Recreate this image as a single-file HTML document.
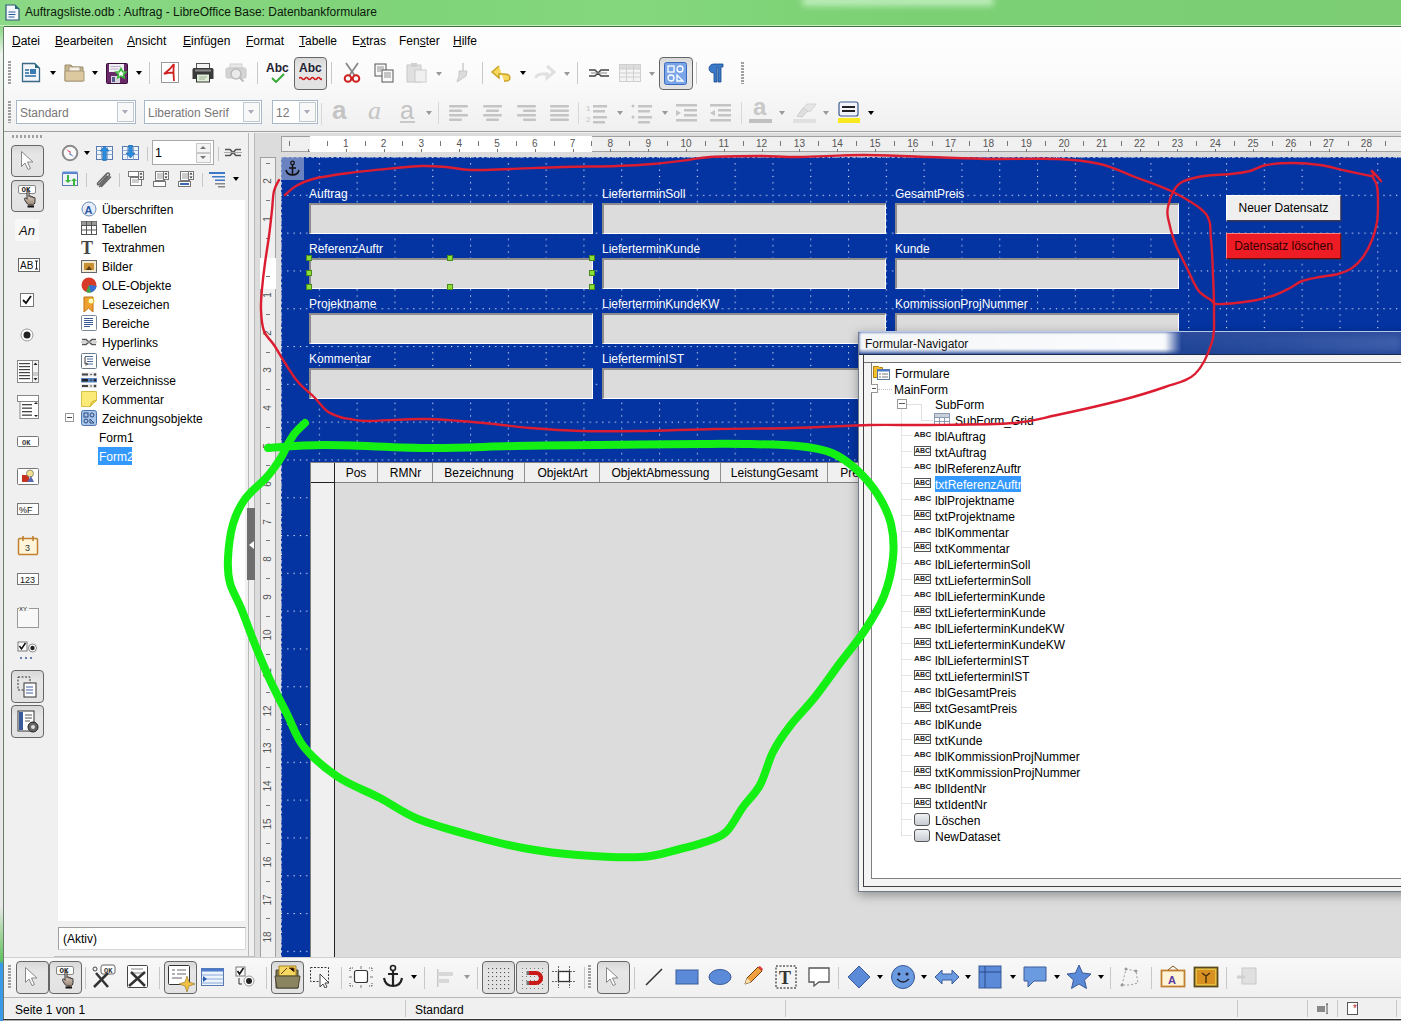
<!DOCTYPE html><html><head><meta charset="utf-8"><style>
*{margin:0;padding:0;box-sizing:border-box}
html,body{width:1401px;height:1021px;overflow:hidden;background:#f0f0f0;font-family:"Liberation Sans",sans-serif;font-size:12px;color:#000}
.a{position:absolute}
.t{position:absolute;white-space:nowrap;font-size:12px;line-height:14px}
.menu{top:34px}
.sep{position:absolute;width:1px;background:#c8c8c8}
.pbtn{position:absolute;border:1px solid #666;border-radius:4px;background:linear-gradient(180deg,#d8d8d8 0%,#e6e6e6 30%,#e2e2e2 100%)}
.dd{position:absolute;width:0;height:0;border-left:3.5px solid transparent;border-right:3.5px solid transparent;border-top:4px solid #000}
.ddg{position:absolute;width:0;height:0;border-left:3.5px solid transparent;border-right:3.5px solid transparent;border-top:4px solid #999}
.lbl{position:absolute;color:#fff;font-size:12px;line-height:14px;white-space:nowrap}
.fld{position:absolute;width:284px;height:31px;background:#dcdcdc;border-top:2px solid #8c8c8c;border-left:2px solid #8c8c8c;border-bottom:1px solid #fff;border-right:1px solid #fff}
.hd{position:absolute;width:6px;height:6px;background:#8be038;border:1px solid #4a8a1a}
.nv{position:absolute;font-size:12px;line-height:14px;white-space:nowrap}
</style></head><body>
<div class="a" style="left:0;top:0;width:1401px;height:27px;background:linear-gradient(90deg,#8bd886 0%,#7fd378 30%,#84d77c 45%,#7bd074 65%,#7ccd74 100%);border-bottom:1px solid #3f6f3a"></div>
<div class="a" style="left:0;top:25px;width:1401px;height:1px;background:#c8ecc4"></div>
<div class="a" style="left:0;top:26px;width:4px;height:995px;background:linear-gradient(180deg,#8ad684 0px,#b0e4ac 12px,#eef4ee 28px,#ececec 120px,#e8e8e8 880px,#90d08a 915px,#60c060 935px,#3a9ae8 938px,#3a9ae8 100%)"></div>
<svg class="a" style="left:5px;top:4px" width="15" height="17" viewBox="0 0 15 17"><path d="M1 1h9l4 4v11H1z" fill="#f4f8fc" stroke="#2a5a78" stroke-width="1.2"/><path d="M10 1l4 4h-4z" fill="#2a6a80"/><path d="M3.5 8h7M3.5 10.5h7M3.5 13h6" stroke="#2a5a9a" stroke-width="1"/></svg>
<div class="t" style="left:25px;top:5px;font-size:12px;color:#0a1a0a">Auftragsliste.odb : Auftrag - LibreOffice Base: Datenbankformulare</div>
<div class="a" style="left:802px;top:-4px;width:192px;height:10px;background:rgba(230,255,230,0.6);filter:blur(3px);border-radius:4px"></div>
<div class="a" style="left:3px;top:27px;width:1398px;height:994px;background:#f0f0f0;border-left:1px solid #6c7c6c"></div>
<div class="a" style="left:4px;top:27px;width:1397px;height:105px;background:linear-gradient(180deg,#fefefe 0%,#fbfbfb 45%,#f0f0f0 100%);border-bottom:1px solid #a0a0a0"></div>
<div class="t menu" style="left:12px"><u>D</u>atei</div>
<div class="t menu" style="left:55px"><u>B</u>earbeiten</div>
<div class="t menu" style="left:127px"><u>A</u>nsicht</div>
<div class="t menu" style="left:183px"><u>E</u>infügen</div>
<div class="t menu" style="left:246px"><u>F</u>ormat</div>
<div class="t menu" style="left:299px"><u>T</u>abelle</div>
<div class="t menu" style="left:352px">E<u>x</u>tras</div>
<div class="t menu" style="left:399px">Fen<u>s</u>ter</div>
<div class="t menu" style="left:453px"><u>H</u>ilfe</div>
<div class="a" style="left:8px;top:61px;width:3px;height:23px;background:repeating-linear-gradient(180deg,#a0a0a0 0 2px,transparent 2px 3px)"></div>
<svg class="a" style="left:21px;top:62px" width="20" height="21" viewBox="0 0 20 21"><path d="M1.5 1.5h12l5 5v13h-17z" fill="#f2f6fa" stroke="#3a6a88" stroke-width="1.3"/><path d="M14 1l5 5h-5z" fill="#2a6a80"/><path d="M4 8h4M4 11h4M4 14h11" stroke="#2a6aa0" stroke-width="1.3"/><rect x="9" y="7" width="6" height="5" fill="#3a7ab0"/></svg>
<div class="dd" style="left:50px;top:71px"></div>
<svg class="a" style="left:64px;top:63px" width="21" height="19" viewBox="0 0 21 19"><path d="M1 2h6l2 2h10v14H1z" fill="#c8b890" stroke="#9a8a6a"/><rect x="5" y="4" width="11" height="6" fill="#f4f0e4" stroke="#a09070" stroke-width="0.8"/><path d="M1 8h19v10H1z" fill="#dcc9a0" stroke="#a89878"/></svg>
<div class="dd" style="left:92px;top:71px"></div>
<svg class="a" style="left:106px;top:63px" width="22" height="21" viewBox="0 0 22 21"><rect x="0.5" y="0.5" width="21" height="20" rx="1" fill="#6a2a6a" stroke="#3a103a"/><rect x="3" y="1" width="15" height="8" fill="#f0eef4"/><path d="M4.5 3.5h10M4.5 6h8" stroke="#b0a8c0" stroke-width="0.8"/><rect x="5" y="13" width="9" height="7" fill="#d8d4e0"/><rect x="6" y="14" width="3" height="5" fill="#5a5a8a"/><path d="M15 5.5l1.6 3.2 3.4.4-2.5 2.3.7 3.4-3.2-1.7-3.2 1.7.7-3.4-2.5-2.3 3.4-.4z" fill="#fff" stroke="#3ab83a" stroke-width="1.6"/></svg>
<div class="dd" style="left:136px;top:71px"></div>
<div class="sep" style="left:149px;top:62px;height:22px"></div>
<svg class="a" style="left:161px;top:62px" width="18" height="21" viewBox="0 0 18 21"><rect x="0.5" y="0.5" width="17" height="20" fill="#fff" stroke="#999"/><path d="M13 2c-2 3-6 7-10 10 3-1 6-1.5 9-1.5M13 2c-1 5-0.5 11 0 17" stroke="#d02020" stroke-width="1.8" fill="none"/></svg>
<svg class="a" style="left:192px;top:63px" width="22" height="20" viewBox="0 0 22 20"><rect x="4.5" y="0.5" width="13" height="5" fill="#f4f4f4" stroke="#555"/><path d="M2 5h18a1.5 1.5 0 0 1 1.5 1.5V16h-21V6.5A1.5 1.5 0 0 1 2 5z" fill="#3a3a3a"/><rect x="3" y="6.5" width="16" height="2" fill="#8a8a8a"/><rect x="4.5" y="11" width="13" height="8" fill="#dfeed8" stroke="#333"/><path d="M7 14h8M7 16h6" stroke="#8aa080" stroke-width="0.8"/></svg>
<svg class="a" style="left:225px;top:63px" width="22" height="20" viewBox="0 0 22 20"><rect x="5" y="1" width="12" height="4" fill="#e8e8e8" stroke="#d0d0d0"/><rect x="1" y="5" width="20" height="10" rx="1.5" fill="#d4d4d4" stroke="#c8c8c8"/><circle cx="11" cy="11" r="5" fill="#eaeaea" stroke="#bcbcbc" stroke-width="1.6"/><path d="M14.5 14.5l4 4" stroke="#bcbcbc" stroke-width="2"/></svg>
<div class="sep" style="left:257px;top:62px;height:22px"></div>
<div class="t" style="left:266px;top:61px;font-weight:bold;font-size:12px;color:#223">Abc</div>
<svg class="a" style="left:271px;top:73px" width="14" height="10" viewBox="0 0 14 10"><path d="M1 5l4 4 8-8" stroke="#3aaa3a" stroke-width="2" fill="none"/></svg>
<div class="pbtn" style="left:294px;top:57px;width:33px;height:33px"></div>
<div class="t" style="left:299px;top:61px;font-weight:bold;font-size:12px;color:#223">Abc</div>
<svg class="a" style="left:299px;top:76px" width="23" height="5" viewBox="0 0 23 5"><path d="M0 2.5q1.5-2 3 0t3 0 3 0 3 0 3 0 3 0 3 0 2 0" stroke="#d02020" stroke-width="1.6" fill="none"/></svg>
<div class="sep" style="left:331px;top:62px;height:22px"></div>
<svg class="a" style="left:343px;top:62px" width="18" height="21" viewBox="0 0 18 21"><path d="M3 1l9 13M15 1L6 14" stroke="#888" stroke-width="1.8"/><circle cx="5" cy="16.5" r="3.3" fill="none" stroke="#d02020" stroke-width="2"/><circle cx="13" cy="16.5" r="3.3" fill="none" stroke="#d02020" stroke-width="2"/></svg>
<svg class="a" style="left:374px;top:63px" width="20" height="20" viewBox="0 0 20 20"><rect x="1" y="1" width="11" height="12" fill="#fafafa" stroke="#555"/><rect x="8" y="7" width="11" height="12" fill="#fafafa" stroke="#555"/><path d="M3 4h7M3 6h7M3 8h4M10 10h7M10 12h7M10 14h7" stroke="#777" stroke-width="0.8"/></svg>
<svg class="a" style="left:406px;top:62px" width="22" height="21" viewBox="0 0 22 21"><rect x="1" y="3" width="14" height="17" fill="#e0e0e0" stroke="#c8c8c8"/><rect x="5" y="1" width="6" height="4" fill="#d0d0d0"/><rect x="9" y="8" width="11" height="12" fill="#f0f0f0" stroke="#ccc"/></svg>
<div class="ddg" style="left:436px;top:72px"></div>
<svg class="a" style="left:452px;top:62px" width="18" height="21" viewBox="0 0 18 21"><path d="M10 1l2 0 0 8-2 0z" fill="#d8d8d8"/><path d="M7 9h8l-1 5-9 6 2-6z" fill="#dcdcdc" stroke="#c8c8c8"/></svg>
<div class="sep" style="left:482px;top:62px;height:22px"></div>
<svg class="a" style="left:490px;top:64px" width="23" height="18" viewBox="0 0 23 18"><path d="M9 2L2 8l7 6V10h5c4 0 6 2 6 4s-2 3-4 3h-2" stroke="#c8a020" stroke-width="1.4" fill="#f4d860"/></svg>
<div class="dd" style="left:520px;top:71px"></div>
<svg class="a" style="left:534px;top:64px" width="22" height="18" viewBox="0 0 22 18"><path d="M13 2l7 6-7 6V10H8c-4 0-6 2-6 4" stroke="#e0e0e0" stroke-width="3" fill="none"/></svg>
<div class="ddg" style="left:564px;top:72px"></div>
<div class="sep" style="left:577px;top:62px;height:22px"></div>
<svg class="a" style="left:588px;top:66px" width="22" height="14" viewBox="0 0 22 14"><path d="M1 4h6l3 3 3-3h8M1 10h6l3-3 3 3h8" stroke="#444" stroke-width="1.5" fill="none"/><path d="M3 7h16" stroke="#888" stroke-width="1"/></svg>
<svg class="a" style="left:619px;top:64px" width="22" height="18" viewBox="0 0 22 18"><rect x="0.5" y="0.5" width="21" height="17" fill="#f4f4f4" stroke="#d0d0d0"/><rect x="1" y="1" width="20" height="4" fill="#dcdcdc"/><path d="M1 5h20M1 9h20M1 13h20M7.5 1v16M14.5 1v16" stroke="#d0d0d0"/></svg>
<div class="ddg" style="left:649px;top:72px"></div>
<div class="pbtn" style="left:659px;top:57px;width:34px;height:33px"></div>
<svg class="a" style="left:664px;top:62px" width="23" height="23" viewBox="0 0 23 23"><rect x="0.5" y="0.5" width="22" height="22" rx="2" fill="#7aa6e8" stroke="#3a6ac0"/><rect x="4" y="4" width="6" height="6" fill="none" stroke="#fff" stroke-width="1.3"/><circle cx="16" cy="7" r="3" fill="none" stroke="#fff" stroke-width="1.3"/><circle cx="7" cy="16" r="3" fill="none" stroke="#fff" stroke-width="1.3"/><path d="M13 19h6l-6-6z" fill="none" stroke="#fff" stroke-width="1.3"/></svg>
<div class="sep" style="left:696px;top:62px;height:22px"></div>
<svg class="a" style="left:708px;top:63px" width="16" height="20" viewBox="0 0 16 20"><path d="M6 1h9v3h-2v15h-3V4H9v15H6V10c-3 0-5-2-5-4.5S3 1 6 1z" fill="#3a7ac8" stroke="#1a4a88" stroke-width="0.8"/></svg>
<div class="a" style="left:741px;top:62px;width:3px;height:22px;background:repeating-linear-gradient(180deg,#a0a0a0 0 2px,transparent 2px 3px)"></div>
<div class="a" style="left:8px;top:101px;width:3px;height:22px;background:repeating-linear-gradient(180deg,#a0a0a0 0 2px,transparent 2px 3px)"></div>
<div class="a" style="left:16px;top:100px;width:120px;height:24px;background:#fff;border:1px solid #a8b8c8"></div>
<div class="a" style="left:117px;top:102px;width:17px;height:20px;border:1px solid #c0c8d0;background:#f8f8f8"></div>
<div class="ddg" style="left:122px;top:110px;border-top-color:#aab"></div>
<div class="t" style="left:20px;top:106px;color:#777">Standard</div>
<div class="a" style="left:144px;top:100px;width:118px;height:24px;background:#fff;border:1px solid #a8b8c8"></div>
<div class="a" style="left:243px;top:102px;width:17px;height:20px;border:1px solid #c0c8d0;background:#f8f8f8"></div>
<div class="ddg" style="left:248px;top:110px;border-top-color:#aab"></div>
<div class="t" style="left:148px;top:106px;color:#777">Liberation Serif</div>
<div class="a" style="left:272px;top:100px;width:46px;height:24px;background:#fff;border:1px solid #a8b8c8"></div>
<div class="a" style="left:299px;top:102px;width:17px;height:20px;border:1px solid #c0c8d0;background:#f8f8f8"></div>
<div class="ddg" style="left:304px;top:110px;border-top-color:#aab"></div>
<div class="t" style="left:276px;top:106px;color:#777">12</div>
<div class="sep" style="left:321px;top:103px;height:22px;background:#d8d8d8"></div>
<svg class="a" style="left:328px;top:98px" width="95" height="28"><text x="4" y="21" font-size="26" font-weight="bold" fill="#c4c4c4" font-family="Liberation Sans">a</text><text x="40" y="21" font-size="26" font-style="italic" fill="#c4c4c4" font-family="Liberation Serif">a</text><text x="72" y="21" font-size="25" fill="#c4c4c4" font-family="Liberation Sans">a</text><rect x="72" y="23" width="15" height="2" fill="#c8c8c8"/></svg>
<div class="ddg" style="left:426px;top:111px"></div>
<div class="sep" style="left:438px;top:102px;height:22px;background:#d8d8d8"></div>
<svg class="a" style="left:449px;top:103px" width="20" height="20"><rect x="0" y="2.0" width="19" height="2.5" rx="1" fill="#c4c4c4"/><rect x="0" y="6.5" width="13" height="2.5" rx="1" fill="#c4c4c4"/><rect x="0" y="11.0" width="19" height="2.5" rx="1" fill="#c4c4c4"/><rect x="0" y="15.5" width="13" height="2.5" rx="1" fill="#c4c4c4"/></svg>
<svg class="a" style="left:483px;top:103px" width="20" height="20"><rect x="0" y="2.0" width="19" height="2.5" rx="1" fill="#c4c4c4"/><rect x="3" y="6.5" width="13" height="2.5" rx="1" fill="#c4c4c4"/><rect x="0" y="11.0" width="19" height="2.5" rx="1" fill="#c4c4c4"/><rect x="3" y="15.5" width="13" height="2.5" rx="1" fill="#c4c4c4"/></svg>
<svg class="a" style="left:517px;top:103px" width="20" height="20"><rect x="0" y="2.0" width="19" height="2.5" rx="1" fill="#c4c4c4"/><rect x="6" y="6.5" width="13" height="2.5" rx="1" fill="#c4c4c4"/><rect x="0" y="11.0" width="19" height="2.5" rx="1" fill="#c4c4c4"/><rect x="6" y="15.5" width="13" height="2.5" rx="1" fill="#c4c4c4"/></svg>
<svg class="a" style="left:550px;top:103px" width="20" height="20"><rect x="0" y="2.0" width="19" height="2.5" rx="1" fill="#c4c4c4"/><rect x="0" y="6.5" width="19" height="2.5" rx="1" fill="#c4c4c4"/><rect x="0" y="11.0" width="19" height="2.5" rx="1" fill="#c4c4c4"/><rect x="0" y="15.5" width="19" height="2.5" rx="1" fill="#c4c4c4"/></svg>
<div class="sep" style="left:578px;top:102px;height:22px;background:#d8d8d8"></div>
<svg class="a" style="left:586px;top:102px" width="22" height="22"><text x="0" y="9" font-size="8" fill="#c4c4c4" font-family="Liberation Sans">1</text><text x="0" y="20" font-size="8" fill="#c4c4c4" font-family="Liberation Sans">2</text><rect x="7" y="3" width="14" height="2.5" fill="#c4c4c4"/><rect x="7" y="8" width="12" height="2.5" fill="#c4c4c4"/><rect x="7" y="14" width="14" height="2.5" fill="#c4c4c4"/><rect x="7" y="19" width="12" height="2.5" fill="#c4c4c4"/></svg>
<div class="ddg" style="left:617px;top:111px"></div>
<svg class="a" style="left:631px;top:102px" width="22" height="22"><circle cx="2" cy="4" r="1.5" fill="#c4c4c4"/><circle cx="2" cy="15" r="1.5" fill="#c4c4c4"/><rect x="7" y="3" width="14" height="2.5" fill="#c4c4c4"/><rect x="7" y="8" width="12" height="2.5" fill="#c4c4c4"/><rect x="7" y="14" width="14" height="2.5" fill="#c4c4c4"/><rect x="7" y="19" width="12" height="2.5" fill="#c4c4c4"/></svg>
<div class="ddg" style="left:662px;top:111px"></div>
<svg class="a" style="left:676px;top:102px" width="22" height="22"><rect x="0" y="2" width="21" height="2.5" fill="#c4c4c4"/><rect x="8" y="7" width="13" height="2.5" fill="#c4c4c4"/><rect x="8" y="12" width="13" height="2.5" fill="#c4c4c4"/><rect x="0" y="17" width="21" height="2.5" fill="#c4c4c4"/><path d="M0 8l5 3-5 3z" fill="#c4c4c4"/></svg>
<svg class="a" style="left:710px;top:102px" width="22" height="22"><rect x="0" y="2" width="21" height="2.5" fill="#c4c4c4"/><rect x="8" y="7" width="13" height="2.5" fill="#c4c4c4"/><rect x="8" y="12" width="13" height="2.5" fill="#c4c4c4"/><rect x="0" y="17" width="21" height="2.5" fill="#c4c4c4"/><path d="M5 8l-5 3 5 3z" fill="#c4c4c4"/></svg>
<div class="sep" style="left:741px;top:102px;height:22px;background:#d8d8d8"></div>
<svg class="a" style="left:752px;top:98px" width="20" height="22"><text x="1" y="17" font-size="24" font-weight="bold" fill="#c8c8c8" font-family="Liberation Sans">a</text></svg>
<div class="a" style="left:749px;top:119px;width:23px;height:4px;background:#c0c0c0"></div>
<div class="ddg" style="left:779px;top:111px"></div>
<svg class="a" style="left:795px;top:103px" width="22" height="16"><path d="M2 13l6-8c1-1.5 3-1.5 4 0l2 2-7 7z" fill="#dedede" stroke="#cfcfcf"/><path d="M8 5l4-4h9l-6 8z" fill="#e6e6e6" stroke="#d4d4d4"/></svg>
<div class="a" style="left:793px;top:119px;width:23px;height:4px;background:#e0e0e0"></div>
<div class="ddg" style="left:823px;top:111px"></div>
<svg class="a" style="left:837px;top:100px" width="24" height="24"><rect x="2" y="2" width="19" height="14" rx="2" fill="#f0f4fa" stroke="#3a5a8a" stroke-width="1.2"/><rect x="5" y="6" width="13" height="2" fill="#222"/><rect x="5" y="10" width="13" height="2" fill="#222"/><rect x="1" y="18" width="22" height="5" fill="#f8e820"/></svg>
<div class="dd" style="left:868px;top:111px"></div>
<div class="a" style="left:12px;top:135px;width:32px;height:3px;background:repeating-linear-gradient(90deg,#a0a0a0 0 2px,transparent 2px 4px)"></div>
<div class="pbtn" style="left:11px;top:145px;width:33px;height:32px"></div>
<svg class="a" style="left:19px;top:150px" width="18" height="22"><path d="M2.5 1.5v15l3.5-3.5 3 6.5 2.5-1-3-6.5h5.5z" fill="#fff" stroke="#888" stroke-width="1"/></svg>
<div class="pbtn" style="left:11px;top:180px;width:33px;height:32px"></div>
<svg class="a" style="left:15px;top:183px" width="26" height="26"><defs><linearGradient id="skinG" x1="0" y1="0" x2="0" y2="1"><stop offset="0" stop-color="#f4eee8"/><stop offset="1" stop-color="#9a8470"/></linearGradient></defs><rect x="3.5" y="2.5" width="17" height="8" rx="1.5" fill="#fff" stroke="#888"/><text x="6.5" y="9.3" font-size="7.5" font-weight="bold" fill="#222" font-family="Liberation Mono">OK</text><path d="M12 9c0-1.2 2-1.2 2 0v4.5c0-1 2-1 2 0v0.8c0-1 2-1 2 0v0.8c0-1 2-1 2 0v3.4c0 2-1 3.5-2.5 3.5h-3c-1.5 0-2.5-1.5-3.5-3l-1.5-2.5c-0.6-1 0.8-2 1.6-1.2l0.9 1z" fill="url(#skinG)" stroke="#222" stroke-width="0.9"/><rect x="12.5" y="22.5" width="6.5" height="2" fill="#111"/></svg>
<div class="a" style="left:15px;top:219px;width:24px;height:22px;background:#f8f8f8"></div>
<div class="t" style="left:19px;top:224px;font-style:italic;font-size:13px;color:#111">An</div>
<svg class="a" style="left:18px;top:258px" width="22" height="14"><rect x="0.5" y="0.5" width="21" height="13" fill="#fff" stroke="#666"/><text x="2" y="11" font-size="10" fill="#111" font-family="Liberation Sans">AB</text><path d="M17 3h3M18.5 3v8M17 11h3" stroke="#111" stroke-width="0.9"/></svg>
<svg class="a" style="left:20px;top:293px" width="14" height="14"><rect x="0.5" y="0.5" width="13" height="13" fill="#fff" stroke="#777"/><path d="M3 7l3 3 5-7" stroke="#111" stroke-width="1.8" fill="none"/></svg>
<svg class="a" style="left:20px;top:328px" width="14" height="14"><circle cx="7" cy="7" r="6" fill="#fff" stroke="#999"/><circle cx="7" cy="7" r="3.5" fill="#222"/></svg>
<svg class="a" style="left:17px;top:360px" width="22" height="24"><rect x="0.5" y="0.5" width="21" height="22" fill="#fff" stroke="#888"/><rect x="15.5" y="0.5" width="6" height="22" fill="#f4f4f4" stroke="#888"/><rect x="2" y="3" width="11" height="1.2" fill="#444"/><rect x="2" y="6" width="11" height="1.2" fill="#444"/><rect x="2" y="9" width="11" height="1.2" fill="#444"/><rect x="2" y="12" width="11" height="1.2" fill="#444"/><rect x="2" y="15" width="11" height="1.2" fill="#444"/><rect x="2" y="18" width="11" height="1.2" fill="#444"/><path d="M16.5 5l2-2.5 2 2.5zM16.5 18l2 2.5 2-2.5z" fill="#222"/><rect x="16" y="12" width="5" height="4" fill="#ccc"/></svg>
<svg class="a" style="left:17px;top:395px" width="22" height="24"><rect x="0.5" y="0.5" width="21" height="6" fill="#fff" stroke="#888"/><rect x="3" y="6.5" width="18.5" height="17" fill="#fff" stroke="#888"/><rect x="5" y="9.0" width="10" height="1.3" fill="#444"/><rect x="5" y="12.5" width="10" height="1.3" fill="#444"/><rect x="5" y="16.0" width="10" height="1.3" fill="#444"/><rect x="5" y="19.5" width="10" height="1.3" fill="#444"/><path d="M17 9l2-2 2 2zM17 20l2 2 2-2z" fill="#222"/></svg>
<svg class="a" style="left:17px;top:436px" width="22" height="11"><rect x="0.5" y="0.5" width="21" height="10" rx="1" fill="#fff" stroke="#777"/><text x="5" y="8.5" font-size="7" font-weight="bold" fill="#333" font-family="Liberation Mono">OK</text></svg>
<svg class="a" style="left:17px;top:468px" width="22" height="17"><rect x="0.5" y="0.5" width="21" height="16" rx="1" fill="#fff" stroke="#777"/><rect x="5" y="7" width="7" height="7" fill="#c83020"/><circle cx="13" cy="5.5" r="3.5" fill="#f4e090" stroke="#555" stroke-width="0.6"/><path d="M10 14l4-6 3 6z" fill="#5a6ab0"/></svg>
<svg class="a" style="left:17px;top:503px" width="22" height="12"><rect x="0.5" y="0.5" width="21" height="11" fill="#fff" stroke="#777"/><text x="2" y="9.5" font-size="9" fill="#111" font-family="Liberation Sans">%F</text></svg>
<svg class="a" style="left:17px;top:535px" width="22" height="21"><rect x="1.5" y="3.5" width="19" height="16" rx="1" fill="#fff4d8" stroke="#c08030" stroke-width="1.5"/><path d="M6 1v5M16 1v5" stroke="#c08030" stroke-width="1.6"/><text x="8" y="16" font-size="9" fill="#333" font-family="Liberation Sans">3</text></svg>
<svg class="a" style="left:17px;top:573px" width="22" height="12"><rect x="0.5" y="0.5" width="21" height="11" fill="#fff" stroke="#777"/><text x="3" y="9.5" font-size="9" fill="#111" font-family="Liberation Sans">123</text></svg>
<svg class="a" style="left:17px;top:604px" width="22" height="24"><rect x="0.5" y="4.5" width="21" height="19" fill="#f8f8f8" stroke="#999"/><rect x="2" y="0" width="10" height="7" fill="#f0f0f0"/><text x="2" y="7" font-size="6" fill="#111" font-family="Liberation Sans">XY</text></svg>
<svg class="a" style="left:17px;top:640px" width="22" height="22"><rect x="1" y="2" width="9" height="9" fill="#fff" stroke="#777"/><path d="M2.5 6l2 3 4-6" stroke="#111" stroke-width="1.5" fill="none"/><circle cx="15.5" cy="8" r="4" fill="#fff" stroke="#888"/><circle cx="15.5" cy="8" r="2.2" fill="#222"/><circle cx="4" cy="18" r="1" fill="#3a5a9a"/><circle cx="9" cy="18" r="1" fill="#3a5a9a"/><circle cx="14" cy="18" r="1" fill="#3a5a9a"/></svg>
<div class="pbtn" style="left:11px;top:670px;width:33px;height:33px"></div>
<svg class="a" style="left:16px;top:675px" width="24" height="24"><rect x="2" y="2" width="12" height="13" fill="none" stroke="#333" stroke-dasharray="2 1.5"/><rect x="8" y="8" width="12" height="14" fill="#fff" stroke="#333"/><path d="M10 12h7M10 15h7M10 18h7" stroke="#3a5a9a"/></svg>
<div class="pbtn" style="left:11px;top:705px;width:33px;height:33px"></div>
<svg class="a" style="left:16px;top:710px" width="24" height="24"><rect x="2" y="1" width="16" height="20" fill="#fff" stroke="#333"/><rect x="3" y="2" width="4" height="18" fill="#3a5a9a"/><path d="M9 5h7M9 8h7M9 11h5" stroke="#555"/><circle cx="17" cy="17" r="5" fill="#666" stroke="#222"/><circle cx="17" cy="17" r="2" fill="#ddd"/></svg>
<div class="a" style="left:248px;top:133px;width:1px;height:825px;background:#b8b8b8"></div>
<div class="a" style="left:254px;top:133px;width:1px;height:825px;background:#b8b8b8"></div>
<div class="a" style="left:247px;top:508px;width:8px;height:72px;background:#6e6e6e"></div>
<div class="a" style="left:249px;top:541px;width:0;height:0;border-top:4px solid transparent;border-bottom:4px solid transparent;border-right:5px solid #fff"></div>
<svg class="a" style="left:61px;top:144px" width="18" height="18"><circle cx="9" cy="9" r="7.3" fill="#fafafa" stroke="#8a8a8a" stroke-width="2"/><path d="M5 5l5 3 -1 1z" fill="#e02a4a"/><path d="M13 13l-5-3 1-1z" fill="#3a6ab0"/></svg>
<div class="dd" style="left:84px;top:151px"></div>
<svg class="a" style="left:96px;top:145px" width="17" height="16"><rect x="0.5" y="1.5" width="16" height="13" fill="#eef4fb" stroke="#5a7ab0"/><path d="M0 5.5h17M0 9.5h17M5.5 1v14M11.5 1v14" stroke="#7a9ac8" stroke-width="0.8"/><path d="M8.5 1l4.5 5h-2.7v9.5h-3.6V6H4z" fill="#2a8ee0" stroke="#1a5aa0" stroke-width="0.6"/></svg>
<svg class="a" style="left:122px;top:145px" width="17" height="16"><rect x="0.5" y="1.5" width="16" height="13" fill="#eef4fb" stroke="#5a7ab0"/><path d="M0 5.5h17M0 9.5h17M5.5 1v14M11.5 1v14" stroke="#7a9ac8" stroke-width="0.8"/><path d="M8.5 13l4.5-5h-2.7V0h-3.6v8H4z" fill="#2a8ee0" stroke="#1a5aa0" stroke-width="0.6"/></svg>
<div class="sep" style="left:147px;top:147px;height:14px"></div>
<div class="a" style="left:152px;top:140px;width:62px;height:25px;background:#fff;border:1px solid #a8a8a8"></div>
<div class="t" style="left:155px;top:146px;font-size:12.5px">1</div>
<div class="a" style="left:196px;top:143px;width:15px;height:10px;border:1px solid #c8c8c8;background:#f4f4f4"></div>
<div class="a" style="left:196px;top:153px;width:15px;height:10px;border:1px solid #c8c8c8;background:#f4f4f4"></div>
<div class="a" style="left:200px;top:146px;width:0;height:0;border-left:3.5px solid transparent;border-right:3.5px solid transparent;border-bottom:3px solid #777"></div>
<div class="a" style="left:200px;top:156px;width:0;height:0;border-left:3.5px solid transparent;border-right:3.5px solid transparent;border-top:3px solid #777"></div>
<div class="sep" style="left:218px;top:147px;height:14px"></div>
<svg class="a" style="left:224px;top:146px" width="18" height="13"><path d="M1 3.5h5l3 3 3-3h5M1 9.5h5l3-3 3 3h5" stroke="#555" stroke-width="1.7" fill="none"/><path d="M0 6.5h18" stroke="#aaa" stroke-width="1"/></svg>
<svg class="a" style="left:62px;top:171px" width="16" height="16"><rect x="0.5" y="2.5" width="15" height="12" fill="#f0f4fa" stroke="#5a7ab0"/><rect x="0.5" y="0.5" width="15" height="2" fill="#5a8ad8"/><path d="M5 4v5h-2l3 3 3-3H7V4z" fill="#3ab83a"/><path d="M11 15v-5h-2l3-3 3 3h-2v5z" fill="#3ab83a"/></svg>
<div class="sep" style="left:86px;top:173px;height:14px"></div>
<svg class="a" style="left:95px;top:171px" width="17" height="17"><path d="M4.5 15.5L14 5c1.5-1.7-0.5-4-2.2-2.4L2.8 12c-1 1 0.2 2.4 1.2 1.5l8-8.5M6.5 15.5L15.5 6" stroke="#666" stroke-width="1.6" fill="none" stroke-linecap="round"/></svg>
<div class="sep" style="left:119px;top:173px;height:14px"></div>
<svg class="a" style="left:128px;top:171px" width="16" height="17"><rect x="0.5" y="0.5" width="11" height="5" fill="#fff" stroke="#777"/><rect x="2.5" y="6.5" width="11" height="8" fill="#fff" stroke="#777"/><path d="M4 9h7M4 11h7" stroke="#999"/><rect x="10.5" y="0.5" width="5" height="8" fill="#fff" stroke="#777"/><path d="M11.5 3.5l1.5-2 1.5 2zM11.5 5.5l1.5 2 1.5-2z" fill="#222"/></svg>
<svg class="a" style="left:153px;top:171px" width="16" height="17"><rect x="2.5" y="0.5" width="9" height="9" fill="#fff" stroke="#777"/><path d="M4 3h6M4 5h6M4 7h6" stroke="#999"/><rect x="0.5" y="10.5" width="12" height="5" fill="#fff" stroke="#777"/><rect x="10.5" y="0.5" width="5" height="8" fill="#fff" stroke="#777"/><path d="M11.5 3.5l1.5-2 1.5 2zM11.5 5.5l1.5 2 1.5-2z" fill="#222"/></svg>
<svg class="a" style="left:178px;top:171px" width="16" height="17"><rect x="2.5" y="0.5" width="9" height="9" fill="#fff" stroke="#777"/><path d="M4 3h6M4 5h6M4 7h6" stroke="#999"/><rect x="0.5" y="10.5" width="12" height="5" fill="#fff" stroke="#777"/><rect x="2" y="12" width="9" height="2" fill="#3a6ab8"/><rect x="10.5" y="0.5" width="5" height="8" fill="#fff" stroke="#777"/><path d="M11.5 3.5l1.5-2 1.5 2zM11.5 5.5l1.5 2 1.5-2z" fill="#222"/></svg>
<div class="sep" style="left:202px;top:173px;height:14px"></div>
<svg class="a" style="left:209px;top:172px" width="18" height="16"><rect x="0" y="0" width="16" height="2" fill="#3a7ac8"/><rect x="3" y="4" width="13" height="1.5" fill="#3a7ac8"/><rect x="6" y="7.5" width="10" height="1.5" fill="#3a7ac8"/><rect x="6" y="11" width="10" height="1.5" fill="#888"/><rect x="9" y="14" width="7" height="1.5" fill="#888"/></svg>
<div class="dd" style="left:233px;top:177px"></div>
<div class="a" style="left:58px;top:200px;width:187px;height:721px;background:#fff"></div>
<div class="nv" style="left:102px;top:203px">Überschriften</div>
<div class="nv" style="left:102px;top:222px">Tabellen</div>
<div class="nv" style="left:102px;top:241px">Textrahmen</div>
<div class="nv" style="left:102px;top:260px">Bilder</div>
<div class="nv" style="left:102px;top:279px">OLE-Objekte</div>
<div class="nv" style="left:102px;top:298px">Lesezeichen</div>
<div class="nv" style="left:102px;top:317px">Bereiche</div>
<div class="nv" style="left:102px;top:336px">Hyperlinks</div>
<div class="nv" style="left:102px;top:355px">Verweise</div>
<div class="nv" style="left:102px;top:374px">Verzeichnisse</div>
<div class="nv" style="left:102px;top:393px">Kommentar</div>
<div class="nv" style="left:102px;top:412px">Zeichnungsobjekte</div>
<svg class="a" style="left:81px;top:201px" width="16" height="16"><circle cx="8" cy="8" r="7" fill="#e8eef8" stroke="#6a8ab8"/><text x="3.5" y="12.5" font-size="11" font-weight="bold" fill="#2a5aa8" font-family="Liberation Sans">A</text></svg>
<svg class="a" style="left:81px;top:220px" width="16" height="16"><rect x="0.5" y="1.5" width="15" height="13" fill="#fff" stroke="#555"/><rect x="0.5" y="1.5" width="15" height="4" fill="#999"/><path d="M0 5.5h16M0 10h16M5.5 1v14M10.5 1v14" stroke="#555"/></svg>
<svg class="a" style="left:81px;top:239px" width="16" height="16"><text x="0" y="15" font-size="18" font-weight="bold" fill="#444" font-family="Liberation Serif">T</text></svg>
<svg class="a" style="left:81px;top:258px" width="16" height="16"><rect x="0.5" y="2.5" width="15" height="12" fill="#f0e8d0" stroke="#666"/><rect x="3" y="5" width="10" height="7" fill="#c89030"/><path d="M5 12l3-4 3 4" fill="#5a3a10"/></svg>
<svg class="a" style="left:81px;top:277px" width="16" height="16"><circle cx="8" cy="8" r="7.5" fill="#d83a2a"/><path d="M8 8l7.5 1A7.5 7.5 0 0 1 5 15z" fill="#3aa84a"/><path d="M8 8l2 7.2A7.5 7.5 0 0 0 15.5 9z" fill="#3a6ad8"/></svg>
<svg class="a" style="left:81px;top:296px" width="16" height="16"><path d="M3 1h9v15l-4.5-4L3 16z" fill="#f0a030" stroke="#c07010"/><circle cx="10" cy="5" r="3" fill="#fff8c0" stroke="#e0b020"/></svg>
<svg class="a" style="left:81px;top:315px" width="16" height="16"><rect x="0.5" y="0.5" width="15" height="15" rx="1" fill="#fff" stroke="#7a8a9a"/><path d="M3 3.5h9M3 5.5h9M3 7.5h9M3 9.5h9M3 11.5h6" stroke="#3a5a9a"/></svg>
<svg class="a" style="left:81px;top:334px" width="16" height="16"><path d="M1 5.5h4l3 2.5 3-2.5h4M1 10.5h4l3-2.5 3 2.5h4" stroke="#555" stroke-width="1.6" fill="none"/><path d="M0 8h16" stroke="#aaa" stroke-width="1"/></svg>
<svg class="a" style="left:81px;top:353px" width="16" height="16"><rect x="0.5" y="0.5" width="15" height="15" rx="1" fill="#fff" stroke="#6a7a8a"/><path d="M4 3.5h8M6 6h6M6 8.5h6M6 11h6" stroke="#4a6a9a"/><path d="M4 4v7h2" stroke="#333" fill="none"/><path d="M5 9.5l1.5 1.5L5 12.5" stroke="#333" fill="none"/></svg>
<svg class="a" style="left:81px;top:372px" width="16" height="16"><rect x="0" y="0.5" width="16" height="4" fill="#e8e8e8"/><rect x="1" y="1.5" width="6" height="2" fill="#444"/><circle cx="10" cy="2.5" r="0.8" fill="#444"/><circle cx="14" cy="2.5" r="1.3" fill="#444"/><rect x="0" y="6" width="16" height="4.5" fill="#5a84c0"/><rect x="1" y="7" width="6" height="2.5" fill="#222"/><circle cx="10" cy="8.2" r="0.8" fill="#222"/><circle cx="14" cy="8.2" r="1.3" fill="#222"/><rect x="0" y="12" width="16" height="4" fill="#e8e8e8"/><rect x="1" y="13" width="6" height="2" fill="#444"/><circle cx="10" cy="14" r="0.8" fill="#444"/><circle cx="14" cy="14" r="1.3" fill="#444"/></svg>
<svg class="a" style="left:81px;top:391px" width="16" height="16"><path d="M0.5 0.5h15v9l-6 6h-9z" fill="#fbe978" stroke="#d8c040"/><path d="M9.5 15.5c0-3 1-6 6-6" fill="#e8d050" stroke="#c8b030"/></svg>
<svg class="a" style="left:81px;top:410px" width="16" height="16"><rect x="0.5" y="0.5" width="15" height="15" rx="2" fill="#a8c4e8" stroke="#4a74b0"/><rect x="3" y="3" width="4" height="4" fill="none" stroke="#2a4a80"/><circle cx="11" cy="5" r="2" fill="none" stroke="#2a4a80"/><circle cx="5" cy="11" r="2" fill="none" stroke="#2a4a80"/><path d="M9 13h4l-4-4z" fill="none" stroke="#2a4a80"/></svg>
<div class="a" style="left:65px;top:413px;width:9px;height:9px;border:1px solid #999;background:#fff"></div>
<div class="a" style="left:67px;top:417px;width:5px;height:1px;background:#444"></div>
<div class="nv" style="left:99px;top:431px">Form1</div>
<div class="a" style="left:98px;top:447px;width:34px;height:18px;background:#3399ff"></div>
<div class="nv" style="left:99px;top:450px;color:#fff">Form2</div>
<div class="a" style="left:58px;top:921px;width:187px;height:35px;background:#f0f0f0"></div>
<div class="a" style="left:58px;top:927px;width:188px;height:23px;background:#fff;border:1px solid #a0a0a0;border-right-color:#d8d8d8;border-bottom-color:#d8d8d8"></div>
<div class="nv" style="left:63px;top:932px">(Aktiv)</div>
<div class="a" style="left:54px;top:956px;width:201px;height:1px;background:#c0c0c0"></div>
<div class="a" style="left:255px;top:133px;width:1146px;height:825px;background:#dcdcdc"></div>
<div class="a" style="left:281px;top:136px;width:30px;height:16px;background:#f0f0f0;border:1px solid #a0a0a0"></div>
<div class="a" style="left:591px;top:136px;width:810px;height:16px;background:#f0f0f0;border:1px solid #a0a0a0;border-right:none"></div>
<div class="a" style="left:310px;top:136px;width:282px;height:16px;background:#fff"></div>
<div class="a" style="left:289px;top:141px;width:1px;height:5px;background:#777"></div><div class="a" style="left:327px;top:141px;width:1px;height:5px;background:#777"></div><div class="a" style="left:308px;top:149px;width:1px;height:3px;background:#777"></div><div class="t" style="left:335.8px;top:137px;width:20px;text-align:center;font-size:10px;line-height:14px;color:#555">1</div><div class="a" style="left:365px;top:141px;width:1px;height:5px;background:#777"></div><div class="a" style="left:346px;top:149px;width:1px;height:3px;background:#777"></div><div class="t" style="left:373.6px;top:137px;width:20px;text-align:center;font-size:10px;line-height:14px;color:#555">2</div><div class="a" style="left:402px;top:141px;width:1px;height:5px;background:#777"></div><div class="a" style="left:384px;top:149px;width:1px;height:3px;background:#777"></div><div class="t" style="left:411.4px;top:137px;width:20px;text-align:center;font-size:10px;line-height:14px;color:#555">3</div><div class="a" style="left:440px;top:141px;width:1px;height:5px;background:#777"></div><div class="a" style="left:421px;top:149px;width:1px;height:3px;background:#777"></div><div class="t" style="left:449.2px;top:137px;width:20px;text-align:center;font-size:10px;line-height:14px;color:#555">4</div><div class="a" style="left:478px;top:141px;width:1px;height:5px;background:#777"></div><div class="a" style="left:459px;top:149px;width:1px;height:3px;background:#777"></div><div class="t" style="left:487.0px;top:137px;width:20px;text-align:center;font-size:10px;line-height:14px;color:#555">5</div><div class="a" style="left:516px;top:141px;width:1px;height:5px;background:#777"></div><div class="a" style="left:497px;top:149px;width:1px;height:3px;background:#777"></div><div class="t" style="left:524.8px;top:137px;width:20px;text-align:center;font-size:10px;line-height:14px;color:#555">6</div><div class="a" style="left:554px;top:141px;width:1px;height:5px;background:#777"></div><div class="a" style="left:535px;top:149px;width:1px;height:3px;background:#777"></div><div class="t" style="left:562.6px;top:137px;width:20px;text-align:center;font-size:10px;line-height:14px;color:#555">7</div><div class="a" style="left:591px;top:141px;width:1px;height:5px;background:#777"></div><div class="a" style="left:573px;top:149px;width:1px;height:3px;background:#777"></div><div class="t" style="left:600.4px;top:137px;width:20px;text-align:center;font-size:10px;line-height:14px;color:#555">8</div><div class="a" style="left:629px;top:141px;width:1px;height:5px;background:#777"></div><div class="a" style="left:610px;top:149px;width:1px;height:3px;background:#777"></div><div class="t" style="left:638.2px;top:137px;width:20px;text-align:center;font-size:10px;line-height:14px;color:#555">9</div><div class="a" style="left:667px;top:141px;width:1px;height:5px;background:#777"></div><div class="a" style="left:648px;top:149px;width:1px;height:3px;background:#777"></div><div class="t" style="left:676.0px;top:137px;width:20px;text-align:center;font-size:10px;line-height:14px;color:#555">10</div><div class="a" style="left:705px;top:141px;width:1px;height:5px;background:#777"></div><div class="a" style="left:686px;top:149px;width:1px;height:3px;background:#777"></div><div class="t" style="left:713.8px;top:137px;width:20px;text-align:center;font-size:10px;line-height:14px;color:#555">11</div><div class="a" style="left:743px;top:141px;width:1px;height:5px;background:#777"></div><div class="a" style="left:724px;top:149px;width:1px;height:3px;background:#777"></div><div class="t" style="left:751.6px;top:137px;width:20px;text-align:center;font-size:10px;line-height:14px;color:#555">12</div><div class="a" style="left:780px;top:141px;width:1px;height:5px;background:#777"></div><div class="a" style="left:762px;top:149px;width:1px;height:3px;background:#777"></div><div class="t" style="left:789.4px;top:137px;width:20px;text-align:center;font-size:10px;line-height:14px;color:#555">13</div><div class="a" style="left:818px;top:141px;width:1px;height:5px;background:#777"></div><div class="a" style="left:799px;top:149px;width:1px;height:3px;background:#777"></div><div class="t" style="left:827.2px;top:137px;width:20px;text-align:center;font-size:10px;line-height:14px;color:#555">14</div><div class="a" style="left:856px;top:141px;width:1px;height:5px;background:#777"></div><div class="a" style="left:837px;top:149px;width:1px;height:3px;background:#777"></div><div class="t" style="left:865.0px;top:137px;width:20px;text-align:center;font-size:10px;line-height:14px;color:#555">15</div><div class="a" style="left:894px;top:141px;width:1px;height:5px;background:#777"></div><div class="a" style="left:875px;top:149px;width:1px;height:3px;background:#777"></div><div class="t" style="left:902.8px;top:137px;width:20px;text-align:center;font-size:10px;line-height:14px;color:#555">16</div><div class="a" style="left:932px;top:141px;width:1px;height:5px;background:#777"></div><div class="a" style="left:913px;top:149px;width:1px;height:3px;background:#777"></div><div class="t" style="left:940.6px;top:137px;width:20px;text-align:center;font-size:10px;line-height:14px;color:#555">17</div><div class="a" style="left:969px;top:141px;width:1px;height:5px;background:#777"></div><div class="a" style="left:951px;top:149px;width:1px;height:3px;background:#777"></div><div class="t" style="left:978.4px;top:137px;width:20px;text-align:center;font-size:10px;line-height:14px;color:#555">18</div><div class="a" style="left:1007px;top:141px;width:1px;height:5px;background:#777"></div><div class="a" style="left:988px;top:149px;width:1px;height:3px;background:#777"></div><div class="t" style="left:1016.2px;top:137px;width:20px;text-align:center;font-size:10px;line-height:14px;color:#555">19</div><div class="a" style="left:1045px;top:141px;width:1px;height:5px;background:#777"></div><div class="a" style="left:1026px;top:149px;width:1px;height:3px;background:#777"></div><div class="t" style="left:1054.0px;top:137px;width:20px;text-align:center;font-size:10px;line-height:14px;color:#555">20</div><div class="a" style="left:1083px;top:141px;width:1px;height:5px;background:#777"></div><div class="a" style="left:1064px;top:149px;width:1px;height:3px;background:#777"></div><div class="t" style="left:1091.8px;top:137px;width:20px;text-align:center;font-size:10px;line-height:14px;color:#555">21</div><div class="a" style="left:1121px;top:141px;width:1px;height:5px;background:#777"></div><div class="a" style="left:1102px;top:149px;width:1px;height:3px;background:#777"></div><div class="t" style="left:1129.6px;top:137px;width:20px;text-align:center;font-size:10px;line-height:14px;color:#555">22</div><div class="a" style="left:1158px;top:141px;width:1px;height:5px;background:#777"></div><div class="a" style="left:1140px;top:149px;width:1px;height:3px;background:#777"></div><div class="t" style="left:1167.4px;top:137px;width:20px;text-align:center;font-size:10px;line-height:14px;color:#555">23</div><div class="a" style="left:1196px;top:141px;width:1px;height:5px;background:#777"></div><div class="a" style="left:1177px;top:149px;width:1px;height:3px;background:#777"></div><div class="t" style="left:1205.2px;top:137px;width:20px;text-align:center;font-size:10px;line-height:14px;color:#555">24</div><div class="a" style="left:1234px;top:141px;width:1px;height:5px;background:#777"></div><div class="a" style="left:1215px;top:149px;width:1px;height:3px;background:#777"></div><div class="t" style="left:1243.0px;top:137px;width:20px;text-align:center;font-size:10px;line-height:14px;color:#555">25</div><div class="a" style="left:1272px;top:141px;width:1px;height:5px;background:#777"></div><div class="a" style="left:1253px;top:149px;width:1px;height:3px;background:#777"></div><div class="t" style="left:1280.8px;top:137px;width:20px;text-align:center;font-size:10px;line-height:14px;color:#555">26</div><div class="a" style="left:1310px;top:141px;width:1px;height:5px;background:#777"></div><div class="a" style="left:1291px;top:149px;width:1px;height:3px;background:#777"></div><div class="t" style="left:1318.6px;top:137px;width:20px;text-align:center;font-size:10px;line-height:14px;color:#555">27</div><div class="a" style="left:1348px;top:141px;width:1px;height:5px;background:#777"></div><div class="a" style="left:1329px;top:149px;width:1px;height:3px;background:#777"></div><div class="t" style="left:1356.4px;top:137px;width:20px;text-align:center;font-size:10px;line-height:14px;color:#555">28</div><div class="a" style="left:1385px;top:141px;width:1px;height:5px;background:#777"></div><div class="a" style="left:1366px;top:149px;width:1px;height:3px;background:#777"></div>
<div class="a" style="left:260px;top:157px;width:16px;height:102px;background:#f0f0f0;border:1px solid #a0a0a0"></div>
<div class="a" style="left:260px;top:288px;width:16px;height:670px;background:#f0f0f0;border:1px solid #a0a0a0;border-bottom:none"></div>
<div class="a" style="left:260px;top:258px;width:16px;height:31px;background:#fff"></div>
<div class="a" style="left:266px;top:163px;width:4px;height:1px;background:#777"></div><div class="t" style="left:261px;top:174.4px;width:14px;height:14px;text-align:center;font-size:10px;line-height:14px;color:#555;transform:rotate(-90deg)">2</div><div class="a" style="left:266px;top:200px;width:4px;height:1px;background:#777"></div><div class="t" style="left:261px;top:212.2px;width:14px;height:14px;text-align:center;font-size:10px;line-height:14px;color:#555;transform:rotate(-90deg)">1</div><div class="a" style="left:266px;top:238px;width:4px;height:1px;background:#777"></div><div class="a" style="left:266px;top:276px;width:4px;height:1px;background:#777"></div><div class="t" style="left:261px;top:287.8px;width:14px;height:14px;text-align:center;font-size:10px;line-height:14px;color:#555;transform:rotate(-90deg)">1</div><div class="a" style="left:266px;top:314px;width:4px;height:1px;background:#777"></div><div class="t" style="left:261px;top:325.6px;width:14px;height:14px;text-align:center;font-size:10px;line-height:14px;color:#555;transform:rotate(-90deg)">2</div><div class="a" style="left:266px;top:352px;width:4px;height:1px;background:#777"></div><div class="t" style="left:261px;top:363.4px;width:14px;height:14px;text-align:center;font-size:10px;line-height:14px;color:#555;transform:rotate(-90deg)">3</div><div class="a" style="left:266px;top:389px;width:4px;height:1px;background:#777"></div><div class="t" style="left:261px;top:401.2px;width:14px;height:14px;text-align:center;font-size:10px;line-height:14px;color:#555;transform:rotate(-90deg)">4</div><div class="a" style="left:266px;top:427px;width:4px;height:1px;background:#777"></div><div class="t" style="left:261px;top:439.0px;width:14px;height:14px;text-align:center;font-size:10px;line-height:14px;color:#555;transform:rotate(-90deg)">5</div><div class="a" style="left:266px;top:465px;width:4px;height:1px;background:#777"></div><div class="t" style="left:261px;top:476.8px;width:14px;height:14px;text-align:center;font-size:10px;line-height:14px;color:#555;transform:rotate(-90deg)">6</div><div class="a" style="left:266px;top:503px;width:4px;height:1px;background:#777"></div><div class="t" style="left:261px;top:514.6px;width:14px;height:14px;text-align:center;font-size:10px;line-height:14px;color:#555;transform:rotate(-90deg)">7</div><div class="a" style="left:266px;top:540px;width:4px;height:1px;background:#777"></div><div class="t" style="left:261px;top:552.4px;width:14px;height:14px;text-align:center;font-size:10px;line-height:14px;color:#555;transform:rotate(-90deg)">8</div><div class="a" style="left:266px;top:578px;width:4px;height:1px;background:#777"></div><div class="t" style="left:261px;top:590.2px;width:14px;height:14px;text-align:center;font-size:10px;line-height:14px;color:#555;transform:rotate(-90deg)">9</div><div class="a" style="left:266px;top:616px;width:4px;height:1px;background:#777"></div><div class="t" style="left:261px;top:628.0px;width:14px;height:14px;text-align:center;font-size:10px;line-height:14px;color:#555;transform:rotate(-90deg)">10</div><div class="a" style="left:266px;top:654px;width:4px;height:1px;background:#777"></div><div class="t" style="left:261px;top:665.8px;width:14px;height:14px;text-align:center;font-size:10px;line-height:14px;color:#555;transform:rotate(-90deg)">11</div><div class="a" style="left:266px;top:692px;width:4px;height:1px;background:#777"></div><div class="t" style="left:261px;top:703.6px;width:14px;height:14px;text-align:center;font-size:10px;line-height:14px;color:#555;transform:rotate(-90deg)">12</div><div class="a" style="left:266px;top:729px;width:4px;height:1px;background:#777"></div><div class="t" style="left:261px;top:741.4px;width:14px;height:14px;text-align:center;font-size:10px;line-height:14px;color:#555;transform:rotate(-90deg)">13</div><div class="a" style="left:266px;top:767px;width:4px;height:1px;background:#777"></div><div class="t" style="left:261px;top:779.2px;width:14px;height:14px;text-align:center;font-size:10px;line-height:14px;color:#555;transform:rotate(-90deg)">14</div><div class="a" style="left:266px;top:805px;width:4px;height:1px;background:#777"></div><div class="t" style="left:261px;top:817.0px;width:14px;height:14px;text-align:center;font-size:10px;line-height:14px;color:#555;transform:rotate(-90deg)">15</div><div class="a" style="left:266px;top:843px;width:4px;height:1px;background:#777"></div><div class="t" style="left:261px;top:854.8px;width:14px;height:14px;text-align:center;font-size:10px;line-height:14px;color:#555;transform:rotate(-90deg)">16</div><div class="a" style="left:266px;top:881px;width:4px;height:1px;background:#777"></div><div class="t" style="left:261px;top:892.6px;width:14px;height:14px;text-align:center;font-size:10px;line-height:14px;color:#555;transform:rotate(-90deg)">17</div><div class="a" style="left:266px;top:918px;width:4px;height:1px;background:#777"></div><div class="t" style="left:261px;top:930.4px;width:14px;height:14px;text-align:center;font-size:10px;line-height:14px;color:#555;transform:rotate(-90deg)">18</div>
<svg class="a" style="left:281px;top:157px" width="1120" height="801"><defs><pattern id="g" x="0" y="0" width="37.8" height="37.8" patternUnits="userSpaceOnUse"><rect x="0.00" y="0" width="1.1" height="1.1" fill="#f0f6ff"/><rect x="6.30" y="0" width="1.1" height="1.1" fill="#f0f6ff"/><rect x="12.60" y="0" width="1.1" height="1.1" fill="#f0f6ff"/><rect x="18.90" y="0" width="1.1" height="1.1" fill="#f0f6ff"/><rect x="25.20" y="0" width="1.1" height="1.1" fill="#f0f6ff"/><rect x="31.50" y="0" width="1.1" height="1.1" fill="#f0f6ff"/><rect x="0" y="6.30" width="1.1" height="1.1" fill="#f0f6ff"/><rect x="0" y="12.60" width="1.1" height="1.1" fill="#f0f6ff"/><rect x="0" y="18.90" width="1.1" height="1.1" fill="#f0f6ff"/><rect x="0" y="25.20" width="1.1" height="1.1" fill="#f0f6ff"/><rect x="0" y="31.50" width="1.1" height="1.1" fill="#f0f6ff"/></pattern></defs><rect width="1120" height="801" fill="#0434a2"/><rect width="1120" height="801" fill="url(#g)"/></svg>
<div class="a" style="left:281px;top:157px;width:23px;height:23px;background:#6a82c0"></div>
<svg class="a" style="left:284px;top:160px" width="17" height="17"><circle cx="8.5" cy="3" r="1.8" fill="none" stroke="#111" stroke-width="1.3"/><path d="M8.5 5v10M5 8h7M2 10c1 4 4 5 6.5 5s5.5-1 6.5-5" stroke="#111" stroke-width="1.6" fill="none"/></svg>
<div class="a" style="left:281px;top:157px;width:1120px;height:1px;border-top:1px dashed #c0c8e8;opacity:0.6"></div>
<div class="a" style="left:281px;top:157px;width:1px;height:801px;border-left:1px dashed #c0c8e8;opacity:0.6"></div>
<div class="lbl" style="left:309px;top:187px">Auftrag</div>
<div class="fld" style="left:309px;top:203px"></div>
<div class="lbl" style="left:309px;top:242px">ReferenzAuftr</div>
<div class="fld" style="left:309px;top:258px"></div>
<div class="lbl" style="left:309px;top:297px">Projektname</div>
<div class="fld" style="left:309px;top:313px"></div>
<div class="lbl" style="left:309px;top:352px">Kommentar</div>
<div class="fld" style="left:309px;top:368px"></div>
<div class="lbl" style="left:602px;top:187px">LieferterminSoll</div>
<div class="fld" style="left:602px;top:203px"></div>
<div class="lbl" style="left:602px;top:242px">LieferterminKunde</div>
<div class="fld" style="left:602px;top:258px"></div>
<div class="lbl" style="left:602px;top:297px">LieferterminKundeKW</div>
<div class="fld" style="left:602px;top:313px"></div>
<div class="lbl" style="left:602px;top:352px">LieferterminIST</div>
<div class="fld" style="left:602px;top:368px"></div>
<div class="lbl" style="left:895px;top:187px">GesamtPreis</div>
<div class="fld" style="left:895px;top:203px"></div>
<div class="lbl" style="left:895px;top:242px">Kunde</div>
<div class="fld" style="left:895px;top:258px"></div>
<div class="lbl" style="left:895px;top:297px">KommissionProjNummer</div>
<div class="fld" style="left:895px;top:313px"></div>
<div class="hd" style="left:306px;top:255px"></div>
<div class="hd" style="left:306px;top:270px"></div>
<div class="hd" style="left:306px;top:284px"></div>
<div class="hd" style="left:447px;top:255px"></div>
<div class="hd" style="left:447px;top:284px"></div>
<div class="hd" style="left:589px;top:255px"></div>
<div class="hd" style="left:589px;top:270px"></div>
<div class="hd" style="left:589px;top:284px"></div>
<div class="a" style="left:1226px;top:195px;width:115px;height:26px;background:#efefef;border:1px solid #fff;border-right-color:#5a5a7a;border-bottom-color:#3a3a5a;box-shadow:1px 1px 0 #203070"></div>
<div class="t" style="left:1226px;top:201px;width:115px;text-align:center">Neuer Datensatz</div>
<div class="a" style="left:1226px;top:233px;width:115px;height:26px;background:#ee1c24;border:1px solid #ff8080;border-right-color:#801010;border-bottom-color:#600a0a;box-shadow:1px 1px 0 #203070"></div>
<div class="t" style="left:1226px;top:239px;width:115px;text-align:center;color:#300">Datensatz löschen</div>
<div class="a" style="left:310px;top:462px;width:1091px;height:496px;background:#dcdcdc;border-left:1px solid #808080;border-top:1px solid #808080"></div>
<div class="a" style="left:311px;top:463px;width:1090px;height:20px;background:#f0f0f0;border-bottom:1px solid #808080"></div>
<div class="a" style="left:311px;top:483px;width:23px;height:475px;background:#f0f0f0"></div>
<div class="a" style="left:334px;top:463px;width:1px;height:495px;background:#222"></div>
<div class="a" style="left:311px;top:482px;width:23px;height:1px;background:#222"></div>
<div class="a" style="left:377px;top:463px;width:1px;height:19px;background:#909090"></div>
<div class="t" style="left:334px;top:466px;width:44px;text-align:center">Pos</div>
<div class="a" style="left:432px;top:463px;width:1px;height:19px;background:#909090"></div>
<div class="t" style="left:378px;top:466px;width:55px;text-align:center">RMNr</div>
<div class="a" style="left:524px;top:463px;width:1px;height:19px;background:#909090"></div>
<div class="t" style="left:433px;top:466px;width:92px;text-align:center">Bezeichnung</div>
<div class="a" style="left:599px;top:463px;width:1px;height:19px;background:#909090"></div>
<div class="t" style="left:525px;top:466px;width:75px;text-align:center">ObjektArt</div>
<div class="a" style="left:720px;top:463px;width:1px;height:19px;background:#909090"></div>
<div class="t" style="left:600px;top:466px;width:121px;text-align:center">ObjektAbmessung</div>
<div class="a" style="left:827px;top:463px;width:1px;height:19px;background:#909090"></div>
<div class="t" style="left:721px;top:466px;width:107px;text-align:center">LeistungGesamt</div>
<div class="a" style="left:879px;top:463px;width:1px;height:19px;background:#909090"></div>
<div class="t" style="left:828px;top:466px;width:52px;text-align:center">Preis</div>
<div class="a" style="left:858px;top:331px;width:560px;height:561px;box-shadow:0 3px 10px rgba(0,0,0,0.35)"></div>
<div class="a" style="left:858px;top:331px;width:543px;height:561px;background:linear-gradient(180deg,#dfe6f0 0px,#eef2f6 24px,#f0f0f0 30px);border:1px solid #707a88;border-right:none"></div>
<div class="a" style="left:859px;top:332px;width:542px;height:23px;background:linear-gradient(180deg,#2c4c9c 0%,#23479a 50%,#1f4294 100%)"></div>
<div class="a" style="left:858px;top:331px;width:543px;height:1px;background:#b8c8e8"></div>
<div class="a" style="left:859px;top:332px;width:322px;height:22px;background:linear-gradient(90deg,#f4f6f8 0%,#fafbfc 95%,rgba(250,250,252,0.4) 98%,rgba(250,250,252,0) 100%);-webkit-mask-image:linear-gradient(180deg,#000 0%,#000 75%,rgba(0,0,0,0.3) 100%);filter:blur(1.5px)"></div>
<div class="a" style="left:1180px;top:336px;width:221px;height:16px;background:linear-gradient(90deg,rgba(255,255,255,0) 0%,rgba(120,150,210,0.12) 50%,rgba(160,180,230,0.22) 100%);filter:blur(3px)"></div>
<div class="t" style="left:865px;top:337px;font-size:12px;color:#111">Formular-Navigator</div>
<div class="a" style="left:859px;top:354px;width:542px;height:1px;background:#1a2a50"></div>
<div class="a" style="left:859px;top:355px;width:542px;height:536px;background:#f0f0f0;border-left:4px solid #f4f4f4"></div>
<div class="a" style="left:863px;top:355px;width:538px;height:532px;border-left:1px solid #404040;border-bottom:1px solid #404040;background:#f4f4f4"></div>
<div class="a" style="left:864px;top:362px;width:537px;height:1px;background:#707070"></div>
<div class="a" style="left:871px;top:363px;width:530px;height:516px;background:#fff;border-left:1px solid #808080;border-bottom:1px solid #808080"></div>
<div class="nv" style="left:895px;top:367px">Formulare</div>
<svg class="a" style="left:873px;top:365px" width="17" height="15"><path d="M0.5 1.5h5l1 1h3v10h-9z" fill="#f4c030" stroke="#b08010"/><rect x="4.5" y="4.5" width="12" height="10" fill="#fff" stroke="#5a7a9a"/><rect x="4.5" y="4.5" width="12" height="2" fill="#4a7ac8"/><path d="M6 9h2M9 9h6M6 12h2M9 12h6" stroke="#555" stroke-width="0.8"/></svg>
<div class="nv" style="left:894px;top:383px">MainForm</div>
<div class="nv" style="left:935px;top:398px">SubForm</div>
<div class="nv" style="left:955px;top:414px">SubForm_Grid</div>
<svg class="a" style="left:934px;top:413px" width="16" height="13"><rect x="0.5" y="0.5" width="15" height="12" fill="#fff" stroke="#8a9ab0"/><path d="M0 4.5h16M0 8.5h16M5.5 0v13M10.5 0v13" stroke="#8a9ab0"/><rect x="1" y="1" width="14" height="3" fill="#c8d0dc"/></svg>
<div class="nv" style="left:935px;top:430px">lblAuftrag</div>
<div class="t" style="left:914px;top:430px;font-size:8px;line-height:10px;font-weight:bold;color:#222">ABC</div>
<div class="nv" style="left:935px;top:446px">txtAuftrag</div>
<div class="a" style="left:914px;top:446px;width:17px;height:10px;border:1px solid #555;background:#fff;font-size:7px;line-height:8px;font-weight:bold;color:#222;text-align:center">ABC</div>
<div class="nv" style="left:935px;top:462px">lblReferenzAuftr</div>
<div class="t" style="left:914px;top:462px;font-size:8px;line-height:10px;font-weight:bold;color:#222">ABC</div>
<div class="a" style="left:935px;top:476px;width:86px;height:16px;background:#3399ff"></div>
<div class="nv" style="left:935px;top:478px;color:#fff;width:86px;overflow:hidden">txtReferenzAuftr</div>
<div class="a" style="left:914px;top:478px;width:17px;height:10px;border:1px solid #555;background:#fff;font-size:7px;line-height:8px;font-weight:bold;color:#222;text-align:center">ABC</div>
<div class="nv" style="left:935px;top:494px">lblProjektname</div>
<div class="t" style="left:914px;top:494px;font-size:8px;line-height:10px;font-weight:bold;color:#222">ABC</div>
<div class="nv" style="left:935px;top:510px">txtProjektname</div>
<div class="a" style="left:914px;top:510px;width:17px;height:10px;border:1px solid #555;background:#fff;font-size:7px;line-height:8px;font-weight:bold;color:#222;text-align:center">ABC</div>
<div class="nv" style="left:935px;top:526px">lblKommentar</div>
<div class="t" style="left:914px;top:526px;font-size:8px;line-height:10px;font-weight:bold;color:#222">ABC</div>
<div class="nv" style="left:935px;top:542px">txtKommentar</div>
<div class="a" style="left:914px;top:542px;width:17px;height:10px;border:1px solid #555;background:#fff;font-size:7px;line-height:8px;font-weight:bold;color:#222;text-align:center">ABC</div>
<div class="nv" style="left:935px;top:558px">lblLieferterminSoll</div>
<div class="t" style="left:914px;top:558px;font-size:8px;line-height:10px;font-weight:bold;color:#222">ABC</div>
<div class="nv" style="left:935px;top:574px">txtLieferterminSoll</div>
<div class="a" style="left:914px;top:574px;width:17px;height:10px;border:1px solid #555;background:#fff;font-size:7px;line-height:8px;font-weight:bold;color:#222;text-align:center">ABC</div>
<div class="nv" style="left:935px;top:590px">lblLieferterminKunde</div>
<div class="t" style="left:914px;top:590px;font-size:8px;line-height:10px;font-weight:bold;color:#222">ABC</div>
<div class="nv" style="left:935px;top:606px">txtLieferterminKunde</div>
<div class="a" style="left:914px;top:606px;width:17px;height:10px;border:1px solid #555;background:#fff;font-size:7px;line-height:8px;font-weight:bold;color:#222;text-align:center">ABC</div>
<div class="nv" style="left:935px;top:622px">lblLieferterminKundeKW</div>
<div class="t" style="left:914px;top:622px;font-size:8px;line-height:10px;font-weight:bold;color:#222">ABC</div>
<div class="nv" style="left:935px;top:638px">txtLieferterminKundeKW</div>
<div class="a" style="left:914px;top:638px;width:17px;height:10px;border:1px solid #555;background:#fff;font-size:7px;line-height:8px;font-weight:bold;color:#222;text-align:center">ABC</div>
<div class="nv" style="left:935px;top:654px">lblLieferterminIST</div>
<div class="t" style="left:914px;top:654px;font-size:8px;line-height:10px;font-weight:bold;color:#222">ABC</div>
<div class="nv" style="left:935px;top:670px">txtLieferterminIST</div>
<div class="a" style="left:914px;top:670px;width:17px;height:10px;border:1px solid #555;background:#fff;font-size:7px;line-height:8px;font-weight:bold;color:#222;text-align:center">ABC</div>
<div class="nv" style="left:935px;top:686px">lblGesamtPreis</div>
<div class="t" style="left:914px;top:686px;font-size:8px;line-height:10px;font-weight:bold;color:#222">ABC</div>
<div class="nv" style="left:935px;top:702px">txtGesamtPreis</div>
<div class="a" style="left:914px;top:702px;width:17px;height:10px;border:1px solid #555;background:#fff;font-size:7px;line-height:8px;font-weight:bold;color:#222;text-align:center">ABC</div>
<div class="nv" style="left:935px;top:718px">lblKunde</div>
<div class="t" style="left:914px;top:718px;font-size:8px;line-height:10px;font-weight:bold;color:#222">ABC</div>
<div class="nv" style="left:935px;top:734px">txtKunde</div>
<div class="a" style="left:914px;top:734px;width:17px;height:10px;border:1px solid #555;background:#fff;font-size:7px;line-height:8px;font-weight:bold;color:#222;text-align:center">ABC</div>
<div class="nv" style="left:935px;top:750px">lblKommissionProjNummer</div>
<div class="t" style="left:914px;top:750px;font-size:8px;line-height:10px;font-weight:bold;color:#222">ABC</div>
<div class="nv" style="left:935px;top:766px">txtKommissionProjNummer</div>
<div class="a" style="left:914px;top:766px;width:17px;height:10px;border:1px solid #555;background:#fff;font-size:7px;line-height:8px;font-weight:bold;color:#222;text-align:center">ABC</div>
<div class="nv" style="left:935px;top:782px">lblIdentNr</div>
<div class="t" style="left:914px;top:782px;font-size:8px;line-height:10px;font-weight:bold;color:#222">ABC</div>
<div class="nv" style="left:935px;top:798px">txtIdentNr</div>
<div class="a" style="left:914px;top:798px;width:17px;height:10px;border:1px solid #555;background:#fff;font-size:7px;line-height:8px;font-weight:bold;color:#222;text-align:center">ABC</div>
<div class="nv" style="left:935px;top:814px">Löschen</div>
<div class="a" style="left:914px;top:813px;width:16px;height:13px;border:1px solid #555;border-radius:3px;background:linear-gradient(180deg,#f0f2f4,#c8ccd4)"></div>
<div class="nv" style="left:935px;top:830px">NewDataset</div>
<div class="a" style="left:914px;top:829px;width:16px;height:13px;border:1px solid #555;border-radius:3px;background:linear-gradient(180deg,#f0f2f4,#c8ccd4)"></div>
<div class="a" style="left:878px;top:389px;width:14px;height:1px;border-top:1px dotted #c0c0c0"></div>
<div class="a" style="left:871px;top:384px;width:7px;height:9px;border:1px solid #999;border-left:none;background:#fff"></div>
<div class="a" style="left:872px;top:388px;width:4px;height:1px;background:#555"></div>
<div class="a" style="left:897px;top:399px;width:10px;height:10px;border:1px solid #999;background:#fff"></div>
<div class="a" style="left:899px;top:403px;width:6px;height:1px;background:#555"></div>
<div class="a" style="left:907px;top:404px;width:15px;height:1px;background:#e0e0e0"></div>
<div class="a" style="left:921px;top:404px;width:1px;height:17px;background:#e0e0e0"></div>
<div class="a" style="left:921px;top:420px;width:12px;height:1px;background:#e0e0e0"></div>
<div class="a" style="left:901px;top:409px;width:1px;height:428px;background:#e4e4e4"></div>
<div class="a" style="left:902px;top:435px;width:10px;height:1px;background:#e4e4e4"></div>
<div class="a" style="left:902px;top:451px;width:10px;height:1px;background:#e4e4e4"></div>
<div class="a" style="left:902px;top:467px;width:10px;height:1px;background:#e4e4e4"></div>
<div class="a" style="left:902px;top:483px;width:10px;height:1px;background:#e4e4e4"></div>
<div class="a" style="left:902px;top:499px;width:10px;height:1px;background:#e4e4e4"></div>
<div class="a" style="left:902px;top:515px;width:10px;height:1px;background:#e4e4e4"></div>
<div class="a" style="left:902px;top:531px;width:10px;height:1px;background:#e4e4e4"></div>
<div class="a" style="left:902px;top:547px;width:10px;height:1px;background:#e4e4e4"></div>
<div class="a" style="left:902px;top:563px;width:10px;height:1px;background:#e4e4e4"></div>
<div class="a" style="left:902px;top:579px;width:10px;height:1px;background:#e4e4e4"></div>
<div class="a" style="left:902px;top:595px;width:10px;height:1px;background:#e4e4e4"></div>
<div class="a" style="left:902px;top:611px;width:10px;height:1px;background:#e4e4e4"></div>
<div class="a" style="left:902px;top:627px;width:10px;height:1px;background:#e4e4e4"></div>
<div class="a" style="left:902px;top:643px;width:10px;height:1px;background:#e4e4e4"></div>
<div class="a" style="left:902px;top:659px;width:10px;height:1px;background:#e4e4e4"></div>
<div class="a" style="left:902px;top:675px;width:10px;height:1px;background:#e4e4e4"></div>
<div class="a" style="left:902px;top:691px;width:10px;height:1px;background:#e4e4e4"></div>
<div class="a" style="left:902px;top:707px;width:10px;height:1px;background:#e4e4e4"></div>
<div class="a" style="left:902px;top:723px;width:10px;height:1px;background:#e4e4e4"></div>
<div class="a" style="left:902px;top:739px;width:10px;height:1px;background:#e4e4e4"></div>
<div class="a" style="left:902px;top:755px;width:10px;height:1px;background:#e4e4e4"></div>
<div class="a" style="left:902px;top:771px;width:10px;height:1px;background:#e4e4e4"></div>
<div class="a" style="left:902px;top:787px;width:10px;height:1px;background:#e4e4e4"></div>
<div class="a" style="left:902px;top:803px;width:10px;height:1px;background:#e4e4e4"></div>
<div class="a" style="left:902px;top:819px;width:10px;height:1px;background:#e4e4e4"></div>
<div class="a" style="left:902px;top:835px;width:10px;height:1px;background:#e4e4e4"></div>
<div class="a" style="left:4px;top:957px;width:1397px;height:41px;background:linear-gradient(180deg,#f8f8f8,#f0f0f0);border-top:1px solid #d0d0d0;border-bottom:1px solid #b8b8b8"></div>
<div class="a" style="left:8px;top:965px;width:3px;height:24px;background:repeating-linear-gradient(180deg,#a0a0a0 0 2px,transparent 2px 3px)"></div>
<div class="pbtn" style="left:16px;top:961px;width:33px;height:33px"></div>
<div class="pbtn" style="left:49px;top:961px;width:33px;height:33px"></div>
<svg class="a" style="left:23px;top:966px" width="18" height="22"><path d="M2.5 1.5v15l3.5-3.5 3 6.5 2.5-1-3-6.5h5.5z" fill="#fff" stroke="#888" stroke-width="1"/></svg>
<svg class="a" style="left:53px;top:964px" width="26" height="26"><defs><linearGradient id="skinG2" x1="0" y1="0" x2="0" y2="1"><stop offset="0" stop-color="#f4eee8"/><stop offset="1" stop-color="#9a8470"/></linearGradient></defs><rect x="3.5" y="2.5" width="17" height="8" rx="1.5" fill="#fff" stroke="#888"/><text x="6.5" y="9.3" font-size="7.5" font-weight="bold" fill="#222" font-family="Liberation Mono">OK</text><path d="M12 9c0-1.2 2-1.2 2 0v4.5c0-1 2-1 2 0v0.8c0-1 2-1 2 0v0.8c0-1 2-1 2 0v3.4c0 2-1 3.5-2.5 3.5h-3c-1.5 0-2.5-1.5-3.5-3l-1.5-2.5c-0.6-1 0.8-2 1.6-1.2l0.9 1z" fill="url(#skinG2)" stroke="#222" stroke-width="0.9"/><rect x="12.5" y="22.5" width="6.5" height="2" fill="#111"/></svg>
<div class="sep" style="left:85px;top:967px;height:22px"></div>
<svg class="a" style="left:91px;top:964px" width="26" height="26"><rect x="10" y="1" width="14" height="9" rx="2" fill="#fff" stroke="#666"/><text x="13" y="8.5" font-size="7" font-weight="bold" fill="#333" font-family="Liberation Mono">OK</text><circle cx="4" cy="5" r="2" fill="none" stroke="#444"/><path d="M3 23l14-14M5 9l12 14" stroke="#333" stroke-width="2.5"/></svg>
<svg class="a" style="left:126px;top:964px" width="24" height="26"><rect x="1.5" y="1.5" width="20" height="22" rx="1" fill="#fff" stroke="#444"/><path d="M5 5h12M5 9h12" stroke="#888"/><path d="M3 22l16-14M5 8l14 14" stroke="#333" stroke-width="2.5"/></svg>
<div class="sep" style="left:159px;top:967px;height:22px"></div>
<div class="pbtn" style="left:164px;top:961px;width:33px;height:33px"></div>
<svg class="a" style="left:167px;top:964px" width="28" height="28"><rect x="1.5" y="1.5" width="21" height="19" rx="1" fill="#fff" stroke="#333"/><path d="M5 6h3M10 6h9M5 10h3M10 10h9M5 14h10" stroke="#666"/><path d="M20 12l2 6 6 2-6 2-2 6-2-6-6-2 6-2z" fill="#f0c040" stroke="#907020" stroke-width="0.6"/></svg>
<svg class="a" style="left:201px;top:968px" width="23" height="18"><rect x="0.5" y="0.5" width="22" height="17" fill="#eef4fc" stroke="#5a7ab0"/><rect x="0.5" y="0.5" width="22" height="3" fill="#4a7ac8"/><path d="M1 7h21M1 11h21M1 15h21" stroke="#8aaad8"/><path d="M2 8l4 3-4 3z" fill="#2a5ab0"/></svg>
<svg class="a" style="left:234px;top:966px" width="22" height="22"><rect x="2" y="1" width="9" height="9" fill="#fff" stroke="#777"/><path d="M3.5 5l2 3 4-6" stroke="#111" stroke-width="1.6" fill="none"/><circle cx="15" cy="15" r="5" fill="#fff" stroke="#999"/><circle cx="15" cy="15" r="3" fill="#222"/><path d="M5 12v6h3" stroke="#333" fill="none"/></svg>
<div class="sep" style="left:266px;top:967px;height:22px"></div>
<div class="pbtn" style="left:271px;top:961px;width:33px;height:33px"></div>
<svg class="a" style="left:274px;top:964px" width="27" height="26"><path d="M2 6h22v18H2z" fill="#7a7450" stroke="#4a4430"/><path d="M5 2h17v10H5z" fill="#f4d860" stroke="#a08020"/><path d="M7 10l6-6M15 4h5v4" stroke="#804000"/><path d="M1 12h25l-2 12H3z" fill="#8a8460" stroke="#4a4430"/></svg>
<svg class="a" style="left:309px;top:966px" width="24" height="22"><rect x="1.5" y="1.5" width="18" height="14" fill="none" stroke="#333" stroke-dasharray="2 1.5"/><path d="M11 8v13l3-3 2 4 2-1-2-4h4z" fill="#fff" stroke="#444"/></svg>
<div class="sep" style="left:341px;top:967px;height:22px"></div>
<svg class="a" style="left:349px;top:966px" width="24" height="22"><rect x="5.5" y="4.5" width="13" height="12" rx="2" fill="#fff" stroke="#333" stroke-width="1.2"/><path d="M1 2h3M1 2v3M23 2h-3M23 2v3M1 20h3M1 20v-3M23 20h-3M23 20v-3" stroke="#555" stroke-dasharray="1 1"/><path d="M12 0v3M12 19v3M0 11h3M21 11h3" stroke="#555" stroke-width="0.8"/></svg>
<svg class="a" style="left:382px;top:964px" width="22" height="24"><circle cx="11" cy="4" r="2.5" fill="none" stroke="#222" stroke-width="1.6"/><path d="M11 6v16M6 10h10M2 14c1 6 5 8 9 8s8-2 9-8" stroke="#222" stroke-width="2.2" fill="none"/></svg>
<div class="dd" style="left:411px;top:975px"></div>
<div class="sep" style="left:424px;top:967px;height:22px"></div>
<svg class="a" style="left:435px;top:968px" width="22" height="20"><rect x="2" y="1" width="1.5" height="18" fill="#c8c8c8"/><rect x="4" y="4" width="14" height="4" fill="#d8d8d8"/><rect x="4" y="11" width="10" height="4" fill="#d8d8d8"/></svg>
<div class="ddg" style="left:464px;top:975px"></div>
<div class="sep" style="left:477px;top:967px;height:22px"></div>
<div class="pbtn" style="left:482px;top:961px;width:33px;height:33px"></div>
<div class="pbtn" style="left:516px;top:961px;width:33px;height:33px"></div>
<svg class="a" style="left:485px;top:965px" width="28" height="26"><rect x="3" y="3" width="1.1" height="1.1" fill="#555"/><rect x="3" y="7" width="1.1" height="1.1" fill="#555"/><rect x="3" y="11" width="1.1" height="1.1" fill="#555"/><rect x="3" y="15" width="1.1" height="1.1" fill="#555"/><rect x="3" y="19" width="1.1" height="1.1" fill="#555"/><rect x="3" y="23" width="1.1" height="1.1" fill="#555"/><rect x="7" y="3" width="1.1" height="1.1" fill="#555"/><rect x="7" y="7" width="1.1" height="1.1" fill="#555"/><rect x="7" y="11" width="1.1" height="1.1" fill="#555"/><rect x="7" y="15" width="1.1" height="1.1" fill="#555"/><rect x="7" y="19" width="1.1" height="1.1" fill="#555"/><rect x="7" y="23" width="1.1" height="1.1" fill="#555"/><rect x="11" y="3" width="1.1" height="1.1" fill="#555"/><rect x="11" y="7" width="1.1" height="1.1" fill="#555"/><rect x="11" y="11" width="1.1" height="1.1" fill="#555"/><rect x="11" y="15" width="1.1" height="1.1" fill="#555"/><rect x="11" y="19" width="1.1" height="1.1" fill="#555"/><rect x="11" y="23" width="1.1" height="1.1" fill="#555"/><rect x="15" y="3" width="1.1" height="1.1" fill="#555"/><rect x="15" y="7" width="1.1" height="1.1" fill="#555"/><rect x="15" y="11" width="1.1" height="1.1" fill="#555"/><rect x="15" y="15" width="1.1" height="1.1" fill="#555"/><rect x="15" y="19" width="1.1" height="1.1" fill="#555"/><rect x="15" y="23" width="1.1" height="1.1" fill="#555"/><rect x="19" y="3" width="1.1" height="1.1" fill="#555"/><rect x="19" y="7" width="1.1" height="1.1" fill="#555"/><rect x="19" y="11" width="1.1" height="1.1" fill="#555"/><rect x="19" y="15" width="1.1" height="1.1" fill="#555"/><rect x="19" y="19" width="1.1" height="1.1" fill="#555"/><rect x="19" y="23" width="1.1" height="1.1" fill="#555"/><rect x="23" y="3" width="1.1" height="1.1" fill="#555"/><rect x="23" y="7" width="1.1" height="1.1" fill="#555"/><rect x="23" y="11" width="1.1" height="1.1" fill="#555"/><rect x="23" y="15" width="1.1" height="1.1" fill="#555"/><rect x="23" y="19" width="1.1" height="1.1" fill="#555"/><rect x="23" y="23" width="1.1" height="1.1" fill="#555"/></svg>
<svg class="a" style="left:519px;top:965px" width="28" height="26"><rect x="3" y="3" width="1" height="1" fill="#777"/><rect x="3" y="7" width="1" height="1" fill="#777"/><rect x="3" y="11" width="1" height="1" fill="#777"/><rect x="3" y="15" width="1" height="1" fill="#777"/><rect x="3" y="19" width="1" height="1" fill="#777"/><rect x="3" y="23" width="1" height="1" fill="#777"/><rect x="7" y="3" width="1" height="1" fill="#777"/><rect x="7" y="7" width="1" height="1" fill="#777"/><rect x="7" y="11" width="1" height="1" fill="#777"/><rect x="7" y="15" width="1" height="1" fill="#777"/><rect x="7" y="19" width="1" height="1" fill="#777"/><rect x="7" y="23" width="1" height="1" fill="#777"/><rect x="11" y="3" width="1" height="1" fill="#777"/><rect x="11" y="7" width="1" height="1" fill="#777"/><rect x="11" y="11" width="1" height="1" fill="#777"/><rect x="11" y="15" width="1" height="1" fill="#777"/><rect x="11" y="19" width="1" height="1" fill="#777"/><rect x="11" y="23" width="1" height="1" fill="#777"/><rect x="15" y="3" width="1" height="1" fill="#777"/><rect x="15" y="7" width="1" height="1" fill="#777"/><rect x="15" y="11" width="1" height="1" fill="#777"/><rect x="15" y="15" width="1" height="1" fill="#777"/><rect x="15" y="19" width="1" height="1" fill="#777"/><rect x="15" y="23" width="1" height="1" fill="#777"/><rect x="19" y="3" width="1" height="1" fill="#777"/><rect x="19" y="7" width="1" height="1" fill="#777"/><rect x="19" y="11" width="1" height="1" fill="#777"/><rect x="19" y="15" width="1" height="1" fill="#777"/><rect x="19" y="19" width="1" height="1" fill="#777"/><rect x="19" y="23" width="1" height="1" fill="#777"/><rect x="23" y="3" width="1" height="1" fill="#777"/><rect x="23" y="7" width="1" height="1" fill="#777"/><rect x="23" y="11" width="1" height="1" fill="#777"/><rect x="23" y="15" width="1" height="1" fill="#777"/><rect x="23" y="19" width="1" height="1" fill="#777"/><rect x="23" y="23" width="1" height="1" fill="#777"/><path d="M9 8h8a5 5 0 0 1 0 10H9" stroke="#c81818" stroke-width="4.2" fill="none"/><path d="M7 8h3M7 18h3" stroke="#aaa" stroke-width="4.2"/><path d="M9 6v4M9 16v4" stroke="#222" stroke-width="0.8"/></svg>
<svg class="a" style="left:552px;top:966px" width="24" height="22"><rect x="6.5" y="5.5" width="11" height="10" fill="#fff" stroke="#222" stroke-width="1.3"/><path d="M6.5 0v22M17.5 0v22M0 5.5h24M0 15.5h24" stroke="#444" stroke-width="0.8" stroke-dasharray="2 1"/></svg>
<div class="sep" style="left:584px;top:967px;height:22px"></div>
<div class="a" style="left:588px;top:965px;width:3px;height:24px;background:repeating-linear-gradient(180deg,#a0a0a0 0 2px,transparent 2px 3px)"></div>
<div class="pbtn" style="left:597px;top:961px;width:33px;height:33px"></div>
<svg class="a" style="left:604px;top:966px" width="18" height="22"><path d="M2.5 1.5v15l3.5-3.5 3 6.5 2.5-1-3-6.5h5.5z" fill="#fff" stroke="#888" stroke-width="1"/></svg>
<div class="sep" style="left:634px;top:967px;height:22px"></div>
<svg class="a" style="left:644px;top:967px" width="20" height="20"><path d="M2 18L18 2" stroke="#333" stroke-width="1.6"/></svg>
<svg class="a" style="left:675px;top:968px" width="24" height="18"><rect x="1" y="2" width="22" height="14" fill="#5a8ad8" stroke="#3a5a98"/></svg>
<svg class="a" style="left:708px;top:968px" width="24" height="18"><ellipse cx="12" cy="9" rx="11" ry="7.5" fill="#5a8ad8" stroke="#3a5a98"/></svg>
<svg class="a" style="left:742px;top:965px" width="22" height="22"><path d="M3 19l2-6L16 2l4 4L9 17z" fill="#f0a040" stroke="#704010"/><path d="M16 2l4 4 1-2-3-3z" fill="#e04040"/><path d="M3 19l2-6 4 4z" fill="#f8e0b0"/></svg>
<svg class="a" style="left:775px;top:965px" width="22" height="24"><rect x="1" y="1" width="20" height="22" fill="none" stroke="#111" stroke-dasharray="2 1.5"/><text x="4" y="19" font-size="18" font-weight="bold" fill="#333" font-family="Liberation Serif">T</text></svg>
<svg class="a" style="left:807px;top:966px" width="24" height="22"><path d="M2 2h20v14H12l-5 4v-4H2z" fill="#fff" stroke="#555" stroke-width="1.3"/></svg>
<div class="sep" style="left:838px;top:967px;height:22px"></div>
<svg class="a" style="left:847px;top:965px" width="24" height="24"><path d="M12 1l11 11-11 11L1 12z" fill="#5a8ad8" stroke="#3a5a98"/></svg>
<div class="dd" style="left:877px;top:975px"></div>
<svg class="a" style="left:890px;top:964px" width="26" height="26"><circle cx="13" cy="13" r="11.5" fill="#6a9ae0" stroke="#3a5a98"/><circle cx="9" cy="10" r="1.5" fill="#223"/><circle cx="17" cy="10" r="1.5" fill="#223"/><path d="M7 15q6 6 12 0" stroke="#223" stroke-width="1.3" fill="none"/></svg>
<div class="dd" style="left:921px;top:975px"></div>
<svg class="a" style="left:934px;top:968px" width="26" height="18"><path d="M1 9l7-7v4h10V2l7 7-7 7v-4H8v4z" fill="#6a9ae0" stroke="#3a5a98"/></svg>
<div class="dd" style="left:965px;top:975px"></div>
<svg class="a" style="left:978px;top:965px" width="24" height="24"><rect x="1" y="1" width="22" height="22" fill="#5a8ad8" stroke="#3a5a98"/><path d="M1 7h22M7 1v22" stroke="#2a4a88"/></svg>
<div class="dd" style="left:1010px;top:975px"></div>
<svg class="a" style="left:1022px;top:965px" width="26" height="24"><path d="M2 2h22v14H12l-6 6v-6H2z" fill="#6a9ae0" stroke="#3a5a98"/></svg>
<div class="dd" style="left:1054px;top:975px"></div>
<svg class="a" style="left:1066px;top:964px" width="26" height="26"><path d="M13 1l3.5 8 8.5 1-6.5 6 2 8.5-7.5-4.5-7.5 4.5 2-8.5L1 10l8.5-1z" fill="#5a8ad8" stroke="#3a5a98"/></svg>
<div class="dd" style="left:1098px;top:975px"></div>
<div class="sep" style="left:1110px;top:967px;height:22px"></div>
<svg class="a" style="left:1118px;top:965px" width="24" height="24"><path d="M4 20L8 4l10 2 2 12-8 2z" fill="none" stroke="#999" stroke-dasharray="2 2"/><circle cx="4" cy="20" r="1.5" fill="#999"/><circle cx="8" cy="4" r="1.5" fill="#999"/><circle cx="18" cy="6" r="1.5" fill="#999"/></svg>
<div class="sep" style="left:1151px;top:967px;height:22px"></div>
<svg class="a" style="left:1160px;top:965px" width="26" height="24"><rect x="1.5" y="5.5" width="23" height="16" fill="#fff4d8" stroke="#c08030" stroke-width="1.8"/><path d="M8 5l5-4 5 4" stroke="#805010" fill="none"/><text x="8" y="19" font-size="11" font-weight="bold" fill="#5a3aa0" font-family="Liberation Sans">A</text></svg>
<svg class="a" style="left:1193px;top:965px" width="26" height="24"><rect x="1.5" y="2.5" width="23" height="19" fill="#e8c040" stroke="#5a4a20" stroke-width="1.8"/><rect x="4" y="5" width="18" height="14" fill="#d89020"/><path d="M13 18v-7l-4-3M13 11l4-3" stroke="#3a2a10" stroke-width="1.3" fill="none"/></svg>
<div class="sep" style="left:1226px;top:967px;height:22px"></div>
<svg class="a" style="left:1236px;top:966px" width="24" height="22"><rect x="6" y="2" width="14" height="16" fill="#e0e0e0" stroke="#c8c8c8"/><path d="M1 11h8" stroke="#d0d0d0" stroke-width="3"/></svg>
<div class="a" style="left:4px;top:998px;width:1397px;height:20px;background:#f0f0f0"></div>
<div class="t" style="left:15px;top:1003px">Seite 1 von 1</div>
<div class="a" style="left:405px;top:1000px;width:1px;height:17px;background:#c8c8c8"></div>
<div class="t" style="left:415px;top:1003px">Standard</div>
<div class="a" style="left:785px;top:1000px;width:1px;height:17px;background:#c8c8c8"></div>
<div class="a" style="left:1237px;top:1000px;width:1px;height:17px;background:#c8c8c8"></div>
<div class="a" style="left:1307px;top:1000px;width:1px;height:17px;background:#c8c8c8"></div>
<div class="a" style="left:1337px;top:1000px;width:1px;height:17px;background:#c8c8c8"></div>
<div class="a" style="left:1396px;top:1000px;width:1px;height:17px;background:#c8c8c8"></div>
<svg class="a" style="left:1316px;top:1003px" width="14" height="11"><rect x="1" y="3" width="8" height="6" fill="#888"/><path d="M11 1v10M10 1h2M10 11h2" stroke="#555"/></svg>
<svg class="a" style="left:1347px;top:1002px" width="14" height="13"><rect x="0.5" y="0.5" width="10" height="12" fill="#fff" stroke="#555"/><text x="6" y="10" font-size="10" fill="#c02020" font-family="Liberation Sans">*</text></svg>
<div class="a" style="left:4px;top:1018px;width:1397px;height:1px;background:#fafafa"></div>
<div class="a" style="left:3px;top:1019px;width:1398px;height:1px;background:#303030"></div>
<div class="a" style="left:3px;top:1020px;width:1398px;height:1px;background:#b0b0b0"></div>
<svg class="a" style="left:0;top:0" width="1401" height="1021"><path d="M285,195 C286.8,193.5 291.3,188.7 296,186 C300.7,183.3 304.2,181.2 313,179 C321.8,176.8 335.2,174.8 349,173 C362.8,171.2 384.0,169.2 396,168 C408.0,166.8 412.7,166.2 421,166 C429.3,165.8 437.7,166.3 446,167 C454.3,167.7 460.3,169.7 471,170 C481.7,170.3 494.7,169.5 510,169 C525.3,168.5 545.2,167.5 563,167 C580.8,166.5 602.0,166.5 617,166 C632.0,165.5 641.2,165.0 653,164 C664.8,163.0 678.5,161.2 688,160 C697.5,158.8 698.0,157.7 710,157 C722.0,156.3 745.0,156.0 760,156 C775.0,156.0 782.7,157.2 800,157 C817.3,156.8 842.5,155.0 864,155 C885.5,155.0 907.5,156.3 929,157 C950.5,157.7 971.7,158.7 993,159 C1014.3,159.3 1039.2,158.2 1057,159 C1074.8,159.8 1087.0,161.0 1100,164 C1113.0,167.0 1122.5,172.2 1135,177 C1147.5,181.8 1163.2,186.8 1175,193 C1186.8,199.2 1200.0,206.2 1206,214 C1212.0,221.8 1209.8,229.8 1211,240 C1212.2,250.2 1212.5,263.0 1213,275 C1213.5,287.0 1214.2,300.8 1214,312 C1213.8,323.2 1215.2,331.7 1212,342 C1208.8,352.3 1202.8,366.5 1195,374 C1187.2,381.5 1177.2,382.7 1165,387 C1152.8,391.3 1140.0,395.3 1122,400 C1104.0,404.7 1075.0,411.2 1057,415 C1039.0,418.8 1035.3,421.3 1014,423 C992.7,424.7 953.0,424.7 929,425 C905.0,425.3 892.7,424.5 870,425 C847.3,425.5 818.8,427.3 793,428 C767.2,428.7 740.8,428.5 715,429 C689.2,429.5 660.3,430.7 638,431 C615.7,431.3 599.0,431.5 581,431 C563.0,430.5 546.2,429.3 530,428 C513.8,426.7 501.3,424.5 484,423 C466.7,421.5 445.3,419.3 426,419 C406.7,418.7 380.7,421.0 368,421 C355.3,421.0 354.7,419.7 350,419 C345.3,418.3 343.8,418.3 340,417 C336.2,415.7 331.3,414.3 327,411 C322.7,407.7 318.8,401.8 314,397 C309.2,392.2 302.8,387.7 298,382 C293.2,376.3 289.0,369.2 285,363 C281.0,356.8 277.5,350.3 274,345 C270.5,339.7 266.2,336.8 264,331 C261.8,325.2 261.3,317.0 261,310 C260.7,303.0 261.3,296.8 262,289 C262.7,281.2 263.8,271.8 265,263 C266.2,254.2 267.8,244.8 269,236 C270.2,227.2 271.2,217.5 272,210 C272.8,202.5 272.8,196.0 274,191 C275.2,186.0 278.2,181.8 279,180" fill="none" stroke="#dc1c30" stroke-width="2.4" stroke-linecap="round"/><path d="M1381,181 C1379.5,179.3 1373.5,171.8 1372,171 C1370.5,170.2 1376.2,176.0 1372,176 C1367.8,176.0 1355.7,172.8 1347,171 C1338.3,169.2 1329.0,166.3 1320,165 C1311.0,163.7 1302.0,163.0 1293,163 C1284.0,163.0 1273.2,163.7 1266,165 C1258.8,166.3 1255.8,169.5 1250,171 C1244.2,172.5 1238.7,173.2 1231,174 C1223.3,174.8 1212.2,174.7 1204,176 C1195.8,177.3 1187.2,179.3 1182,182 C1176.8,184.7 1175.3,187.8 1173,192 C1170.7,196.2 1168.8,202.7 1168,207 C1167.2,211.3 1166.8,212.0 1168,218 C1169.2,224.0 1172.0,235.0 1175,243 C1178.0,251.0 1182.2,258.2 1186,266 C1189.8,273.8 1193.8,284.3 1198,290 C1202.2,295.7 1208.0,297.7 1211,300 C1214.0,302.3 1211.8,303.5 1216,304 C1220.2,304.5 1229.2,303.7 1236,303 C1242.8,302.3 1250.5,301.3 1257,300 C1263.5,298.7 1269.5,297.0 1275,295 C1280.5,293.0 1285.5,290.3 1290,288 C1294.5,285.7 1297.0,282.8 1302,281 C1307.0,279.2 1314.0,278.2 1320,277 C1326.0,275.8 1332.7,275.5 1338,274 C1343.3,272.5 1347.8,270.8 1352,268 C1356.2,265.2 1359.7,261.7 1363,257 C1366.3,252.3 1369.7,245.8 1372,240 C1374.3,234.2 1376.0,228.0 1377,222 C1378.0,216.0 1378.0,210.0 1378,204 C1378.0,198.0 1378.0,190.7 1377,186 C1376.0,181.3 1372.8,177.7 1372,176" fill="none" stroke="#dc1c30" stroke-width="2.4" stroke-linecap="round"/><path d="M268,448 C277.5,447.5 298.0,445.0 325,445 C352.0,445.0 398.3,447.8 430,448 C461.7,448.2 486.8,446.5 515,446 C543.2,445.5 568.2,445.3 599,445 C629.8,444.7 676.0,444.2 700,444 C724.0,443.8 726.7,443.7 743,444 C759.3,444.3 783.2,444.5 798,446 C812.8,447.5 822.2,449.0 832,453 C841.8,457.0 849.3,463.0 857,470 C864.7,477.0 872.3,486.0 878,495 C883.7,504.0 888.5,513.5 891,524 C893.5,534.5 894.2,546.0 893,558 C891.8,570.0 888.7,584.0 884,596 C879.3,608.0 872.3,618.8 865,630 C857.7,641.2 848.3,651.8 840,663 C831.7,674.2 823.3,686.5 815,697 C806.7,707.5 797.0,716.8 790,726 C783.0,735.2 778.0,742.2 773,752 C768.0,761.8 765.0,775.8 760,785 C755.0,794.2 748.7,799.2 743,807 C737.3,814.8 732.3,826.2 726,832 C719.7,837.8 712.7,839.2 705,842 C697.3,844.8 690.7,846.5 680,849 C669.3,851.5 658.0,856.0 641,857 C624.0,858.0 597.7,856.5 578,855 C558.3,853.5 540.5,851.2 523,848 C505.5,844.8 490.5,840.8 473,836 C455.5,831.2 433.5,825.3 418,819 C402.5,812.7 393.3,805.0 380,798 C366.7,791.0 350.7,785.5 338,777 C325.3,768.5 312.5,757.5 304,747 C295.5,736.5 292.7,725.2 287,714 C281.3,702.8 275.5,692.0 270,680 C264.5,668.0 258.8,654.0 254,642 C249.2,630.0 245.0,617.8 241,608 C237.0,598.2 232.2,591.3 230,583 C227.8,574.7 227.5,567.8 228,558 C228.5,548.2 230.2,533.8 233,524 C235.8,514.2 239.5,506.7 245,499 C250.5,491.3 261.2,483.2 266,478 C270.8,472.8 271.3,471.7 274,468 C276.7,464.3 279.7,460.0 282,456 C284.3,452.0 285.8,447.8 288,444 C290.2,440.2 292.2,436.5 295,433 C297.8,429.5 303.3,424.7 305,423" fill="none" stroke="#14f014" stroke-width="8" stroke-linecap="round" stroke-linejoin="round"/></svg>
</body></html>
